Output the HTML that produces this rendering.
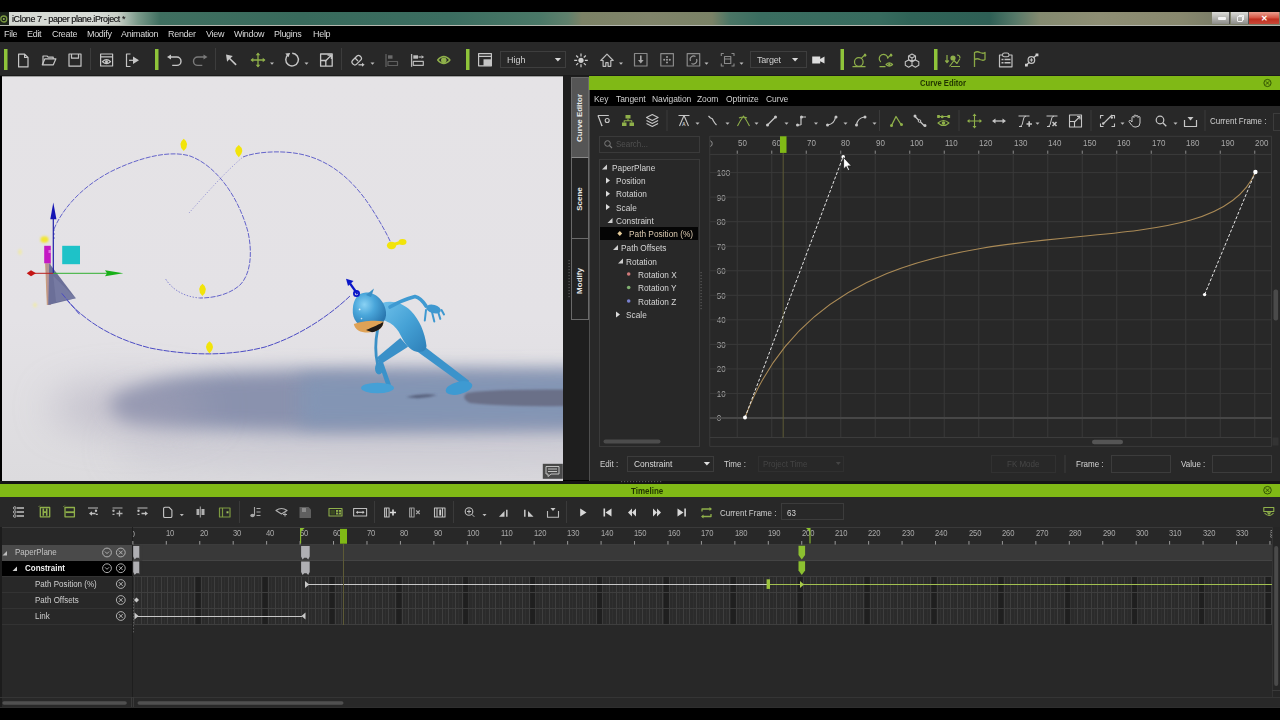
<!DOCTYPE html><html><head><meta charset="utf-8"><style>
*{margin:0;padding:0;box-sizing:border-box}
html,body{width:1280px;height:720px;overflow:hidden;background:#000;font-family:"Liberation Sans",sans-serif;-webkit-font-smoothing:antialiased}
.a{position:absolute;white-space:nowrap}
.t8{font-size:8px;line-height:10px;color:#cfcfcf}
svg{position:absolute;left:0;top:0}
</style></head><body>
<div class="a" style="left:0px;top:12px;width:1280px;height:14px;background:linear-gradient(90deg,#d4d8d2 0,#d8dbd6 95px,#c8cec6 118px,#7a9a8a 138px,#3f6f60 160px,#386a5c 300px,#3b6d60 450px,#4a7867 540px,#5f806c 568px,#7c8266 582px,#80846a 650px,#7a8266 712px,#4a7565 730px,#3a6d60 760px,#376b5e 880px,#2f6357 910px,#2e5f55 990px,#557868 1015px,#848a70 1040px,#8e8e74 1100px,#88886e 1180px,#7c7e68 1212px)"></div>
<div class="a" style="left:0px;top:12px;width:9px;height:13px;background:#1a221a"></div>
<div class="a" style="left:1212px;top:12px;width:18px;height:12px;background:linear-gradient(#dcdcd8,#b4b4b0 50%,#8c8c88);border-right:1px solid #555"></div>
<div class="a" style="left:1230.5px;top:12px;width:18px;height:12px;background:linear-gradient(#dcdcd8,#b4b4b0 50%,#8c8c88);border-right:1px solid #555"></div>
<div class="a" style="left:1249px;top:12px;width:30px;height:12px;background:linear-gradient(#eaa090,#d85a48 45%,#c03020 60%,#c84838)"></div>
<div class="a" style="left:1218px;top:17.3px;width:7.5px;height:2.8px;background:#f4f4f4;border-radius:1px"></div>
<div class="a" style="left:1237px;top:16px;width:6px;height:5.5px;border:1.4px solid #f0f0f0;border-radius:1px"></div>
<div class="a" style="left:1238.5px;top:14.5px;width:5.5px;height:5px;border-top:1.3px solid #f0f0f0;border-right:1.3px solid #f0f0f0"></div>
<div class="a a" style="left:1260.5px;top:12.5px;font-size:8px;color:#fff;font-weight:bold;line-height:11px">&#x2715;</div>
<div class="a" style="left:0px;top:24.5px;width:1280px;height:1.6px;background:#b4b6ae"></div>
<div class="a" style="left:0px;top:26px;width:1280px;height:16px;background:#000"></div>
<div class="a" style="left:0px;top:42px;width:1280px;height:34px;background:#282828"></div>
<div class="a" style="left:0px;top:75px;width:1280px;height:1px;background:#1b1b1b"></div>
<div class="a" style="left:2px;top:76px;width:561px;height:405px;background:#e3e2e6"></div>
<div class="a" style="left:563px;top:76px;width:26px;height:404px;background:#1e1e1e"></div>
<div class="a" style="left:589px;top:76px;width:691px;height:405px;background:#282828"></div>
<div class="a" style="left:0px;top:481px;width:1280px;height:226px;background:#282828"></div>
<div class="a" style="left:0px;top:481px;width:1280px;height:3px;background:#151515"></div>
<div class="a t8" style="left:12px;top:13px;font-size:9.54px;color:#262626;letter-spacing:-0.445px;line-height:12px;text-shadow:0 0 0.4px #555;transform:scaleX(0.9434);transform-origin:0 0">iClone 7 - paper plane.iProject *</div>
<div class="a t8" style="left:4px;top:29px;font-size:9.90px;color:#dadada;letter-spacing:-0.330px;line-height:10px;transform:scaleX(0.9091);transform-origin:0 0">File</div>
<div class="a t8" style="left:27px;top:29px;font-size:9.90px;color:#dadada;letter-spacing:-0.330px;line-height:10px;transform:scaleX(0.9091);transform-origin:0 0">Edit</div>
<div class="a t8" style="left:52px;top:29px;font-size:9.90px;color:#dadada;letter-spacing:-0.330px;line-height:10px;transform:scaleX(0.9091);transform-origin:0 0">Create</div>
<div class="a t8" style="left:87px;top:29px;font-size:9.90px;color:#dadada;letter-spacing:-0.330px;line-height:10px;transform:scaleX(0.9091);transform-origin:0 0">Modify</div>
<div class="a t8" style="left:121px;top:29px;font-size:9.90px;color:#dadada;letter-spacing:-0.330px;line-height:10px;transform:scaleX(0.9091);transform-origin:0 0">Animation</div>
<div class="a t8" style="left:168px;top:29px;font-size:9.90px;color:#dadada;letter-spacing:-0.330px;line-height:10px;transform:scaleX(0.9091);transform-origin:0 0">Render</div>
<div class="a t8" style="left:206px;top:29px;font-size:9.90px;color:#dadada;letter-spacing:-0.330px;line-height:10px;transform:scaleX(0.9091);transform-origin:0 0">View</div>
<div class="a t8" style="left:234px;top:29px;font-size:9.90px;color:#dadada;letter-spacing:-0.330px;line-height:10px;transform:scaleX(0.9091);transform-origin:0 0">Window</div>
<div class="a t8" style="left:274px;top:29px;font-size:9.90px;color:#dadada;letter-spacing:-0.330px;line-height:10px;transform:scaleX(0.9091);transform-origin:0 0">Plugins</div>
<div class="a t8" style="left:313px;top:29px;font-size:9.90px;color:#dadada;letter-spacing:-0.330px;line-height:10px;transform:scaleX(0.9091);transform-origin:0 0">Help</div>
<div class="a t8" style="left:507px;top:55px;font-size:9.45px;color:#cfcfcf;line-height:10px;transform:scaleX(0.9524);transform-origin:0 0">High</div>
<div class="a t8" style="left:757px;top:54.5px;font-size:9.45px;color:#cfcfcf;line-height:10px;letter-spacing:-0.210px;transform:scaleX(0.9524);transform-origin:0 0">Target</div>
<div class="a" style="left:589px;top:76px;width:691px;height:13.5px;background:#80b916"></div>
<div class="a t8" style="left:920px;top:78px;font-size:9.44px;font-weight:bold;color:#1f3300;line-height:10px;transform:scaleX(0.8136);transform-origin:left">Curve Editor</div>
<div class="a" style="left:589px;top:89.5px;width:691px;height:16.5px;background:#000"></div>
<div class="a t8" style="left:594px;top:93.6px;font-size:9.18px;color:#d0d0d0;line-height:10px;letter-spacing:-0.108px;transform:scaleX(0.9259);transform-origin:0 0">Key</div>
<div class="a t8" style="left:616px;top:93.6px;font-size:9.18px;color:#d0d0d0;line-height:10px;letter-spacing:-0.108px;transform:scaleX(0.9259);transform-origin:0 0">Tangent</div>
<div class="a t8" style="left:651.5px;top:93.6px;font-size:9.18px;color:#d0d0d0;line-height:10px;letter-spacing:-0.108px;transform:scaleX(0.9259);transform-origin:0 0">Navigation</div>
<div class="a t8" style="left:697px;top:93.6px;font-size:9.18px;color:#d0d0d0;line-height:10px;letter-spacing:-0.108px;transform:scaleX(0.9259);transform-origin:0 0">Zoom</div>
<div class="a t8" style="left:726px;top:93.6px;font-size:9.18px;color:#d0d0d0;line-height:10px;letter-spacing:-0.108px;transform:scaleX(0.9259);transform-origin:0 0">Optimize</div>
<div class="a t8" style="left:766px;top:93.6px;font-size:9.18px;color:#d0d0d0;line-height:10px;letter-spacing:-0.108px;transform:scaleX(0.9259);transform-origin:0 0">Curve</div>
<div class="a" style="left:589px;top:89.5px;width:1.2px;height:391px;background:#4e4e4e"></div>
<div class="a t8" style="left:1210px;top:116px;font-size:9.44px;color:#d0d0d0;line-height:10px;transform:scaleX(0.8475);transform-origin:0 0">Current Frame :</div>
<div class="a" style="left:1273px;top:112.5px;width:10px;height:18px;border:1px solid #3c3c3c"></div>
<div class="a" style="left:599px;top:136px;width:101px;height:16.5px;border:1px solid #3a3a3a"></div>
<div class="a t8" style="left:616px;top:139px;font-size:9.44px;color:#505050;line-height:10px;transform:scaleX(0.8475);transform-origin:0 0">Search...</div>
<div class="a" style="left:599px;top:159px;width:101px;height:288px;border:1px solid #3a3a3a"></div>
<div class="a" style="left:600px;top:227px;width:98px;height:13px;background:#050505"></div>
<div class="a t8" style="left:611.5px;top:162.5px;font-size:9.79px;color:#d6d6d6;line-height:10px;transform:scaleX(0.8475);transform-origin:0 0">PaperPlane</div>
<div class="a t8" style="left:616px;top:176.0px;font-size:9.79px;color:#d6d6d6;line-height:10px;transform:scaleX(0.8475);transform-origin:0 0">Position</div>
<div class="a t8" style="left:616px;top:189.25px;font-size:9.79px;color:#d6d6d6;line-height:10px;transform:scaleX(0.8475);transform-origin:0 0">Rotation</div>
<div class="a t8" style="left:616px;top:202.5px;font-size:9.79px;color:#d6d6d6;line-height:10px;transform:scaleX(0.8475);transform-origin:0 0">Scale</div>
<div class="a t8" style="left:615.75px;top:216.0px;font-size:9.79px;color:#d6d6d6;line-height:10px;transform:scaleX(0.8475);transform-origin:0 0">Constraint</div>
<div class="a t8" style="left:628.5px;top:229.0px;font-size:9.79px;color:#dccab0;line-height:10px;transform:scaleX(0.8475);transform-origin:0 0">Path Position (%)</div>
<div class="a t8" style="left:620.5px;top:243.0px;font-size:9.79px;color:#d6d6d6;line-height:10px;transform:scaleX(0.8475);transform-origin:0 0">Path Offsets</div>
<div class="a t8" style="left:626px;top:256.5px;font-size:9.79px;color:#d6d6d6;line-height:10px;transform:scaleX(0.8475);transform-origin:0 0">Rotation</div>
<div class="a t8" style="left:638px;top:269.5px;font-size:9.79px;color:#d6d6d6;line-height:10px;transform:scaleX(0.8475);transform-origin:0 0">Rotation X</div>
<div class="a t8" style="left:638px;top:283.0px;font-size:9.79px;color:#d6d6d6;line-height:10px;transform:scaleX(0.8475);transform-origin:0 0">Rotation Y</div>
<div class="a t8" style="left:638px;top:296.5px;font-size:9.79px;color:#d6d6d6;line-height:10px;transform:scaleX(0.8475);transform-origin:0 0">Rotation Z</div>
<div class="a t8" style="left:625.5px;top:310.0px;font-size:9.79px;color:#d6d6d6;line-height:10px;transform:scaleX(0.8475);transform-origin:0 0">Scale</div>
<div class="a t8" style="left:737.5px;top:138px;font-size:9.44px;color:#a8a8a8;line-height:9px;transform:scaleX(0.8475);transform-origin:0 0">50</div>
<div class="a t8" style="left:772.0px;top:138px;font-size:9.44px;color:#a8a8a8;line-height:9px;transform:scaleX(0.8475);transform-origin:0 0">60</div>
<div class="a t8" style="left:806.5px;top:138px;font-size:9.44px;color:#a8a8a8;line-height:9px;transform:scaleX(0.8475);transform-origin:0 0">70</div>
<div class="a t8" style="left:841.0px;top:138px;font-size:9.44px;color:#a8a8a8;line-height:9px;transform:scaleX(0.8475);transform-origin:0 0">80</div>
<div class="a t8" style="left:875.5px;top:138px;font-size:9.44px;color:#a8a8a8;line-height:9px;transform:scaleX(0.8475);transform-origin:0 0">90</div>
<div class="a t8" style="left:910.0px;top:138px;font-size:9.44px;color:#a8a8a8;line-height:9px;transform:scaleX(0.8475);transform-origin:0 0">100</div>
<div class="a t8" style="left:944.5px;top:138px;font-size:9.44px;color:#a8a8a8;line-height:9px;transform:scaleX(0.8475);transform-origin:0 0">110</div>
<div class="a t8" style="left:979.0px;top:138px;font-size:9.44px;color:#a8a8a8;line-height:9px;transform:scaleX(0.8475);transform-origin:0 0">120</div>
<div class="a t8" style="left:1013.5px;top:138px;font-size:9.44px;color:#a8a8a8;line-height:9px;transform:scaleX(0.8475);transform-origin:0 0">130</div>
<div class="a t8" style="left:1048.0px;top:138px;font-size:9.44px;color:#a8a8a8;line-height:9px;transform:scaleX(0.8475);transform-origin:0 0">140</div>
<div class="a t8" style="left:1082.5px;top:138px;font-size:9.44px;color:#a8a8a8;line-height:9px;transform:scaleX(0.8475);transform-origin:0 0">150</div>
<div class="a t8" style="left:1117.0px;top:138px;font-size:9.44px;color:#a8a8a8;line-height:9px;transform:scaleX(0.8475);transform-origin:0 0">160</div>
<div class="a t8" style="left:1151.5px;top:138px;font-size:9.44px;color:#a8a8a8;line-height:9px;transform:scaleX(0.8475);transform-origin:0 0">170</div>
<div class="a t8" style="left:1186.0px;top:138px;font-size:9.44px;color:#a8a8a8;line-height:9px;transform:scaleX(0.8475);transform-origin:0 0">180</div>
<div class="a t8" style="left:1220.5px;top:138px;font-size:9.44px;color:#a8a8a8;line-height:9px;transform:scaleX(0.8475);transform-origin:0 0">190</div>
<div class="a t8" style="left:1255.0px;top:138px;font-size:9.44px;color:#a8a8a8;line-height:9px;transform:scaleX(0.8475);transform-origin:0 0">200</div>
<div class="a t8" style="left:715.9px;top:413.4px;font-size:9.44px;color:#a4a4a4;line-height:9px;background:#282828;padding:0 1px;transform:scaleX(0.8475);transform-origin:0 0">0</div>
<div class="a t8" style="left:715.9px;top:388.9px;font-size:9.44px;color:#a4a4a4;line-height:9px;background:#282828;padding:0 1px;transform:scaleX(0.8475);transform-origin:0 0">10</div>
<div class="a t8" style="left:715.9px;top:364.3px;font-size:9.44px;color:#a4a4a4;line-height:9px;background:#282828;padding:0 1px;transform:scaleX(0.8475);transform-origin:0 0">20</div>
<div class="a t8" style="left:715.9px;top:339.8px;font-size:9.44px;color:#a4a4a4;line-height:9px;background:#282828;padding:0 1px;transform:scaleX(0.8475);transform-origin:0 0">30</div>
<div class="a t8" style="left:715.9px;top:315.2px;font-size:9.44px;color:#a4a4a4;line-height:9px;background:#282828;padding:0 1px;transform:scaleX(0.8475);transform-origin:0 0">40</div>
<div class="a t8" style="left:715.9px;top:290.7px;font-size:9.44px;color:#a4a4a4;line-height:9px;background:#282828;padding:0 1px;transform:scaleX(0.8475);transform-origin:0 0">50</div>
<div class="a t8" style="left:715.9px;top:266.2px;font-size:9.44px;color:#a4a4a4;line-height:9px;background:#282828;padding:0 1px;transform:scaleX(0.8475);transform-origin:0 0">60</div>
<div class="a t8" style="left:715.9px;top:241.6px;font-size:9.44px;color:#a4a4a4;line-height:9px;background:#282828;padding:0 1px;transform:scaleX(0.8475);transform-origin:0 0">70</div>
<div class="a t8" style="left:715.9px;top:217.1px;font-size:9.44px;color:#a4a4a4;line-height:9px;background:#282828;padding:0 1px;transform:scaleX(0.8475);transform-origin:0 0">80</div>
<div class="a t8" style="left:715.9px;top:192.5px;font-size:9.44px;color:#a4a4a4;line-height:9px;background:#282828;padding:0 1px;transform:scaleX(0.8475);transform-origin:0 0">90</div>
<div class="a t8" style="left:715.9px;top:168.0px;font-size:9.44px;color:#a4a4a4;line-height:9px;background:#282828;padding:0 1px;transform:scaleX(0.8475);transform-origin:0 0">100</div>
<div class="a t8" style="left:599.5px;top:459px;font-size:9.44px;color:#d0d0d0;line-height:10px;transform:scaleX(0.8475);transform-origin:0 0">Edit :</div>
<div class="a" style="left:627.3px;top:455.8px;width:87px;height:16.4px;border:1px solid #3c3c3c"></div>
<div class="a t8" style="left:633.5px;top:459px;font-size:9.91px;color:#dadada;line-height:10px;transform:scaleX(0.8475);transform-origin:0 0">Constraint</div>
<div class="a t8" style="left:724px;top:459px;font-size:9.44px;color:#d0d0d0;line-height:10px;transform:scaleX(0.8475);transform-origin:0 0">Time :</div>
<div class="a" style="left:758px;top:455.8px;width:86px;height:16.4px;border:1px solid #303030"></div>
<div class="a t8" style="left:763px;top:459px;font-size:9.44px;color:#444;line-height:10px;transform:scaleX(0.8475);transform-origin:0 0">Project Time</div>
<div class="a" style="left:991px;top:454.8px;width:65px;height:18px;border:1px solid #313131"></div>
<div class="a t8" style="left:1007px;top:459px;font-size:9.44px;color:#464646;line-height:10px;transform:scaleX(0.8475);transform-origin:0 0">FK Mode</div>
<div class="a t8" style="left:1076px;top:459px;font-size:9.44px;color:#d6d6d6;line-height:10px;transform:scaleX(0.8475);transform-origin:0 0">Frame :</div>
<div class="a" style="left:1111px;top:454.8px;width:60px;height:18px;border:1px solid #3c3c3c"></div>
<div class="a t8" style="left:1181px;top:459px;font-size:9.44px;color:#d6d6d6;line-height:10px;transform:scaleX(0.8475);transform-origin:0 0">Value :</div>
<div class="a" style="left:1212px;top:454.8px;width:60px;height:18px;border:1px solid #3c3c3c"></div>
<div class="a" style="left:571.2px;top:77px;width:17.7px;height:81px;background:#555;border:1px solid #6a6a6a;border-bottom:1.5px solid #8a8a8a"></div>
<div class="a" style="left:571.2px;top:158px;width:17.7px;height:81px;background:#232323;border:1px solid #6a6a6a;border-top:none"></div>
<div class="a" style="left:571.2px;top:239px;width:17.7px;height:81px;background:#232323;border:1px solid #6a6a6a;border-top:none"></div>
<div class="a" style="left:580px;top:117.5px;width:0;height:0"><div style="position:absolute;left:-40px;top:-5px;width:80px;text-align:center;font-size:8px;font-weight:bold;color:#e8e8e8;line-height:10px;transform:rotate(-90deg)">Curve Editor</div></div>
<div class="a" style="left:580px;top:198.5px;width:0;height:0"><div style="position:absolute;left:-40px;top:-5px;width:80px;text-align:center;font-size:8px;font-weight:bold;color:#e8e8e8;line-height:10px;transform:rotate(-90deg)">Scene</div></div>
<div class="a" style="left:580px;top:281px;width:0;height:0"><div style="position:absolute;left:-40px;top:-5px;width:80px;text-align:center;font-size:8px;font-weight:bold;color:#e8e8e8;line-height:10px;transform:rotate(-90deg)">Modify</div></div>
<div class="a" style="left:0px;top:483.8px;width:1280px;height:13.6px;background:#80b916"></div>
<div class="a t8" style="left:630.6px;top:486.2px;font-size:9.44px;font-weight:bold;color:#1f3300;line-height:10px;transform:scaleX(0.8475);transform-origin:0 0">Timeline</div>
<div class="a t8" style="left:720px;top:507.5px;font-size:9.44px;color:#cfcfcf;line-height:10px;transform:scaleX(0.8475);transform-origin:0 0">Current Frame :</div>
<div class="a" style="left:781px;top:502.5px;width:63px;height:17.5px;border:1px solid #3c3c3c"></div>
<div class="a t8" style="left:786.5px;top:507.5px;font-size:9.44px;color:#d4d4d4;line-height:10px;transform:scaleX(0.8475);transform-origin:0 0">63</div>
<div class="a" style="left:0px;top:527px;width:1280px;height:0.8px;background:#3a3a3a"></div>
<div class="a" style="left:0px;top:544.5px;width:131.5px;height:16px;background:#4a4a4a"></div>
<div class="a" style="left:0px;top:560.5px;width:131.5px;height:15.5px;background:#000"></div>
<div class="a" style="left:0px;top:576px;width:131.5px;height:0.8px;background:#333"></div>
<div class="a" style="left:0px;top:592px;width:131.5px;height:0.8px;background:#333"></div>
<div class="a" style="left:0px;top:608px;width:131.5px;height:0.8px;background:#333"></div>
<div class="a" style="left:0px;top:624.3px;width:131.5px;height:0.8px;background:#333"></div>
<div class="a" style="left:0px;top:527px;width:2px;height:180px;background:#1c1c1c"></div>
<div class="a t8" style="left:14.6px;top:546.5px;font-size:9.44px;color:#c4c4c4;line-height:10px;transform:scaleX(0.8475);transform-origin:0 0">PaperPlane</div>
<div class="a t8" style="left:24.5px;top:563.3px;font-size:9.44px;font-weight:bold;color:#f0f0f0;line-height:10px;transform:scaleX(0.8475);transform-origin:0 0">Constraint</div>
<div class="a t8" style="left:34.5px;top:579px;font-size:9.44px;color:#cfcfcf;line-height:10px;transform:scaleX(0.8475);transform-origin:0 0">Path Position (%)</div>
<div class="a t8" style="left:34.5px;top:595px;font-size:9.44px;color:#cfcfcf;line-height:10px;transform:scaleX(0.8475);transform-origin:0 0">Path Offsets</div>
<div class="a t8" style="left:34.5px;top:611px;font-size:9.44px;color:#cfcfcf;line-height:10px;transform:scaleX(0.8475);transform-origin:0 0">Link</div>
<div class="a" style="left:131.5px;top:527px;width:1.5px;height:170px;background:#1e1e1e"></div>
<div class="a t8" style="left:133px;top:528.6px;font-size:9.44px;color:#aaa;line-height:9px;overflow:hidden;width:4px;transform:scaleX(0.8475);transform-origin:0 0"><span style="margin-left:-3px">0</span></div>
<div class="a t8" style="left:166.1px;top:529px;font-size:8.97px;color:#ababab;line-height:9px;letter-spacing:-0.177px;transform:scaleX(0.8475);transform-origin:0 0">10</div>
<div class="a t8" style="left:199.5px;top:529px;font-size:8.97px;color:#ababab;line-height:9px;letter-spacing:-0.177px;transform:scaleX(0.8475);transform-origin:0 0">20</div>
<div class="a t8" style="left:233.0px;top:529px;font-size:8.97px;color:#ababab;line-height:9px;letter-spacing:-0.177px;transform:scaleX(0.8475);transform-origin:0 0">30</div>
<div class="a t8" style="left:266.4px;top:529px;font-size:8.97px;color:#ababab;line-height:9px;letter-spacing:-0.177px;transform:scaleX(0.8475);transform-origin:0 0">40</div>
<div class="a t8" style="left:299.9px;top:529px;font-size:8.97px;color:#ababab;line-height:9px;letter-spacing:-0.177px;transform:scaleX(0.8475);transform-origin:0 0">50</div>
<div class="a t8" style="left:333.3px;top:529px;font-size:8.97px;color:#ababab;line-height:9px;letter-spacing:-0.177px;transform:scaleX(0.8475);transform-origin:0 0">60</div>
<div class="a t8" style="left:366.8px;top:529px;font-size:8.97px;color:#ababab;line-height:9px;letter-spacing:-0.177px;transform:scaleX(0.8475);transform-origin:0 0">70</div>
<div class="a t8" style="left:400.2px;top:529px;font-size:8.97px;color:#ababab;line-height:9px;letter-spacing:-0.177px;transform:scaleX(0.8475);transform-origin:0 0">80</div>
<div class="a t8" style="left:433.7px;top:529px;font-size:8.97px;color:#ababab;line-height:9px;letter-spacing:-0.177px;transform:scaleX(0.8475);transform-origin:0 0">90</div>
<div class="a t8" style="left:467.1px;top:529px;font-size:8.97px;color:#ababab;line-height:9px;letter-spacing:-0.177px;transform:scaleX(0.8475);transform-origin:0 0">100</div>
<div class="a t8" style="left:500.5px;top:529px;font-size:8.97px;color:#ababab;line-height:9px;letter-spacing:-0.177px;transform:scaleX(0.8475);transform-origin:0 0">110</div>
<div class="a t8" style="left:534.0px;top:529px;font-size:8.97px;color:#ababab;line-height:9px;letter-spacing:-0.177px;transform:scaleX(0.8475);transform-origin:0 0">120</div>
<div class="a t8" style="left:567.4px;top:529px;font-size:8.97px;color:#ababab;line-height:9px;letter-spacing:-0.177px;transform:scaleX(0.8475);transform-origin:0 0">130</div>
<div class="a t8" style="left:600.9px;top:529px;font-size:8.97px;color:#ababab;line-height:9px;letter-spacing:-0.177px;transform:scaleX(0.8475);transform-origin:0 0">140</div>
<div class="a t8" style="left:634.3px;top:529px;font-size:8.97px;color:#ababab;line-height:9px;letter-spacing:-0.177px;transform:scaleX(0.8475);transform-origin:0 0">150</div>
<div class="a t8" style="left:667.8px;top:529px;font-size:8.97px;color:#ababab;line-height:9px;letter-spacing:-0.177px;transform:scaleX(0.8475);transform-origin:0 0">160</div>
<div class="a t8" style="left:701.2px;top:529px;font-size:8.97px;color:#ababab;line-height:9px;letter-spacing:-0.177px;transform:scaleX(0.8475);transform-origin:0 0">170</div>
<div class="a t8" style="left:734.7px;top:529px;font-size:8.97px;color:#ababab;line-height:9px;letter-spacing:-0.177px;transform:scaleX(0.8475);transform-origin:0 0">180</div>
<div class="a t8" style="left:768.1px;top:529px;font-size:8.97px;color:#ababab;line-height:9px;letter-spacing:-0.177px;transform:scaleX(0.8475);transform-origin:0 0">190</div>
<div class="a t8" style="left:801.5px;top:529px;font-size:8.97px;color:#ababab;line-height:9px;letter-spacing:-0.177px;transform:scaleX(0.8475);transform-origin:0 0">200</div>
<div class="a t8" style="left:835.0px;top:529px;font-size:8.97px;color:#ababab;line-height:9px;letter-spacing:-0.177px;transform:scaleX(0.8475);transform-origin:0 0">210</div>
<div class="a t8" style="left:868.4px;top:529px;font-size:8.97px;color:#ababab;line-height:9px;letter-spacing:-0.177px;transform:scaleX(0.8475);transform-origin:0 0">220</div>
<div class="a t8" style="left:901.9px;top:529px;font-size:8.97px;color:#ababab;line-height:9px;letter-spacing:-0.177px;transform:scaleX(0.8475);transform-origin:0 0">230</div>
<div class="a t8" style="left:935.3px;top:529px;font-size:8.97px;color:#ababab;line-height:9px;letter-spacing:-0.177px;transform:scaleX(0.8475);transform-origin:0 0">240</div>
<div class="a t8" style="left:968.8px;top:529px;font-size:8.97px;color:#ababab;line-height:9px;letter-spacing:-0.177px;transform:scaleX(0.8475);transform-origin:0 0">250</div>
<div class="a t8" style="left:1002.2px;top:529px;font-size:8.97px;color:#ababab;line-height:9px;letter-spacing:-0.177px;transform:scaleX(0.8475);transform-origin:0 0">260</div>
<div class="a t8" style="left:1035.6px;top:529px;font-size:8.97px;color:#ababab;line-height:9px;letter-spacing:-0.177px;transform:scaleX(0.8475);transform-origin:0 0">270</div>
<div class="a t8" style="left:1069.1px;top:529px;font-size:8.97px;color:#ababab;line-height:9px;letter-spacing:-0.177px;transform:scaleX(0.8475);transform-origin:0 0">280</div>
<div class="a t8" style="left:1102.5px;top:529px;font-size:8.97px;color:#ababab;line-height:9px;letter-spacing:-0.177px;transform:scaleX(0.8475);transform-origin:0 0">290</div>
<div class="a t8" style="left:1136.0px;top:529px;font-size:8.97px;color:#ababab;line-height:9px;letter-spacing:-0.177px;transform:scaleX(0.8475);transform-origin:0 0">300</div>
<div class="a t8" style="left:1169.4px;top:529px;font-size:8.97px;color:#ababab;line-height:9px;letter-spacing:-0.177px;transform:scaleX(0.8475);transform-origin:0 0">310</div>
<div class="a t8" style="left:1202.9px;top:529px;font-size:8.97px;color:#ababab;line-height:9px;letter-spacing:-0.177px;transform:scaleX(0.8475);transform-origin:0 0">320</div>
<div class="a t8" style="left:1236.3px;top:529px;font-size:8.97px;color:#ababab;line-height:9px;letter-spacing:-0.177px;transform:scaleX(0.8475);transform-origin:0 0">330</div>
<div class="a t8" style="left:1269.8px;top:529px;font-size:8.97px;color:#ababab;line-height:9px;letter-spacing:-0.177px;transform:scaleX(0.8475);transform-origin:0 0">340</div>
<div class="a t8" style="left:1269.5px;top:530px;font-size:9.44px;color:#a8a8a8;line-height:9px;overflow:hidden;width:2.2px;transform:scaleX(0.8475);transform-origin:0 0">3</div>
<div class="a" style="left:133px;top:544.4px;width:1139px;height:0.8px;background:#3c3c3c"></div>
<div class="a" style="left:133px;top:545px;width:1139px;height:15.5px;background:#393939"></div>
<div class="a" style="left:133px;top:560.5px;width:1139px;height:15.5px;background:#2c2c2c"></div>
<div class="a" style="left:133px;top:560.2px;width:1139px;height:0.6px;background:#444"></div>
<div class="a" style="left:133px;top:576px;width:1139px;height:48.5px;background:#2b2b2b"></div>
<div class="a" style="left:1272px;top:527px;width:8px;height:170px;background:#262626;border-left:1px solid #333"></div>
<div class="a" style="left:1272px;top:690px;width:8px;height:0.8px;background:#3a3a3a"></div>
<div class="a" style="left:0px;top:697px;width:1280px;height:0.8px;background:#353535"></div>
<div class="a" style="left:0px;top:706.5px;width:1280px;height:0.8px;background:#2e2e2e"></div>
<div class="a" style="left:131.3px;top:697px;width:3px;height:10px;border-left:1px solid #3a3a3a;border-right:1px solid #3a3a3a"></div>
<svg width="1280" height="720" viewBox="0 0 1280 720"><defs><clipPath id="vpc"><rect x="2" y="76" width="561" height="405"/></clipPath><filter id="b20" x="-50%" y="-200%" width="200%" height="500%"><feGaussianBlur stdDeviation="20"/></filter><filter id="b10" x="-50%" y="-200%" width="200%" height="500%"><feGaussianBlur stdDeviation="9"/></filter><filter id="b6" x="-50%" y="-200%" width="200%" height="500%"><feGaussianBlur stdDeviation="6"/></filter><filter id="b3" x="-50%" y="-200%" width="200%" height="500%"><feGaussianBlur stdDeviation="2.5"/></filter><filter id="b1" x="-50%" y="-50%" width="200%" height="200%"><feGaussianBlur stdDeviation="0.8"/></filter><linearGradient id="bodyg" x1="0" y1="0" x2="1" y2="1"><stop offset="0" stop-color="#6ec0ea"/><stop offset="0.5" stop-color="#46a2d6"/><stop offset="1" stop-color="#2d7fb8"/></linearGradient><radialGradient id="headg" cx="0.35" cy="0.35" r="0.7"><stop offset="0" stop-color="#8ad2f4"/><stop offset="0.45" stop-color="#4aa6da"/><stop offset="1" stop-color="#2a78b0"/></radialGradient><linearGradient id="floorg" x1="0" y1="0" x2="0" y2="1"><stop offset="0" stop-color="#e5e3e6"/><stop offset="0.6" stop-color="#e4e2e6"/><stop offset="1" stop-color="#dcdbde"/></linearGradient></defs><g clip-path="url(#vpc)"><rect x="2" y="76" width="561" height="405" fill="url(#floorg)"/><rect x="2" y="76" width="561" height="1" fill="#a0a0a0"/><path d="M120,440 Q200,425 300,424 L600,425 L600,462 Q300,468 120,455z" fill="#b4b2c2" opacity="0.55" filter="url(#b20)"/><path d="M115,396 Q150,377 220,372 Q300,368 380,369 L600,371 L600,430 L380,432 Q220,434 130,422 Q100,410 115,396z" fill="#8a92ae" filter="url(#b10)"/><path d="M300,376 L600,373 L600,424 L300,426z" fill="#8296b6" opacity="0.85" filter="url(#b10)"/><ellipse cx="130" cy="408" rx="80" ry="22" fill="#a8a4b8" opacity="0.6" filter="url(#b20)"/><path d="M467,393 Q500,388 600,390 L600,405 Q520,408 470,403 Q460,398 467,393z" fill="#6a7088" filter="url(#b1)"/><path d="M54,229 C62,210 80,188 110,172 C140,157 170,150 190,156 C215,165 238,195 248,232 C253,255 250,275 240,285 C230,294 215,298 200,298" fill="none" stroke="#4c4cc4" stroke-width="0.85" stroke-dasharray="5,1.3" opacity="1"/><path d="M200,298 C185,297 172,290 165,278" fill="none" stroke="#4c4cc4" stroke-width="0.8" stroke-dasharray="1.5,1.5" opacity="0.8"/><path d="M189,213 C205,195 225,172 243,157" fill="none" stroke="#4c4cc4" stroke-width="0.7" stroke-dasharray="1.2,1.8" opacity="0.7"/><path d="M243,157 C255,152 280,150 300,154 C330,160 352,180 368,203 C378,218 386,232 391,243" fill="none" stroke="#4c4cc4" stroke-width="0.85" stroke-dasharray="5,1.3" opacity="1"/><path d="M62,294 C80,318 110,338 150,348 C190,356 230,356 265,347 C300,336 330,315 350,296" fill="none" stroke="#4c4cc4" stroke-width="1" stroke-dasharray="6,1" opacity="1"/><path d="M54,229 L54,240" fill="none" stroke="#4c4cc4" stroke-width="0.8" stroke-dasharray="2,2" opacity="1"/><path d="M183.75,138.8 Q190.75,144 183.75,151 Q176.75,144 183.75,138.8z" fill="#f2e40a" opacity="1"/><path d="M238.75,145.05 Q245.75,150.25 238.75,157.25 Q231.75,150.25 238.75,145.05z" fill="#f2e40a" opacity="1"/><path d="M202.5,283.8 Q209.5,289 202.5,296 Q195.5,289 202.5,283.8z" fill="#f2e40a" opacity="1"/><path d="M209.5,341.3 Q216.5,346.5 209.5,353.5 Q202.5,346.5 209.5,341.3z" fill="#f2e40a" opacity="1"/><ellipse cx="391.5" cy="245.5" rx="4.6" ry="3.8" fill="#f2e40a"/><ellipse cx="402.5" cy="242" rx="4" ry="3" fill="#f2e40a"/><path d="M392,245 L402,242" stroke="#f2e40a" stroke-width="3"/><ellipse cx="44.5" cy="239.5" rx="4" ry="3.2" fill="#f2e630" filter="url(#b1)"/><ellipse cx="20" cy="252" rx="2" ry="3" fill="#f4ee90" opacity="0.6" filter="url(#b1)"/><ellipse cx="35" cy="305" rx="2" ry="2.5" fill="#f4ee90" opacity="0.6" filter="url(#b1)"/><path d="M45.6,263.3 L50.8,263.3 L50.8,305 L47.3,305z" fill="#b89494"/><path d="M45.6,263.3 L47.3,305" stroke="#c8946a" stroke-width="0.8"/><path d="M49.2,263.3 L75.8,298.3 L48.3,305z" fill="#6b6f98"/><path d="M53.3,276 L75.8,298.3 L56,302z" fill="#7d82a8" opacity="0.6"/><line x1="53.3" y1="218" x2="53.3" y2="273.3" stroke="#2020a8" stroke-width="1.2"/><path d="M53.3,202.5 L56.4,219.2 L50.3,219.2z" fill="#1414b4"/><line x1="31" y1="273.3" x2="53.3" y2="273.3" stroke="#b82020" stroke-width="1"/><path d="M26.7,273.3 L31,270.3 L36,273.3 L31,276.3z" fill="#c41414"/><line x1="53.3" y1="273.3" x2="108" y2="273.3" stroke="#30b030" stroke-width="1"/><path d="M123.3,273.3 L105,270.3 L107,273.3 L105,276.3z" fill="#18b018"/><rect x="44.2" y="245.8" width="6.6" height="17.5" fill="#c418c4"/><rect x="48.5" y="250" width="2.5" height="3" fill="#e070e0"/><rect x="62.2" y="245.8" width="17.8" height="18.4" fill="#1ec2c8"/><path d="M61.7,293.3 L80,315" fill="none" stroke="#4c4cc4" stroke-width="1" stroke-dasharray="6,1" opacity="1"/><g><path d="M412,347.8 L423.7,345.9 L469.4,380.9 L464.5,385.8 Z" fill="#3b93cb"/><ellipse cx="459" cy="388" rx="13.6" ry="6.2" transform="rotate(-14 459 388)" fill="#3e9ad2"/><path d="M400.3,338.1 L408.1,346.8 L381.8,363.4 L377,357.5 Z" fill="#3a90c8"/><path d="M377,358.5 L382.8,361.4 L391,384.8 L386.3,385.2 Z" fill="#3a92ca"/><ellipse cx="377.5" cy="388" rx="16.5" ry="5.2" fill="#45a0d6"/><path d="M382,303 C392,300 403,303 411,311 C419,319 425,332 426.5,346 C426,352 420,353 414,351 C408,348 404,342 401,336 C398,330 395,326 390,323 C386,321 383,320 381,318 Z" fill="url(#bodyg)"/><path d="M390,307 Q402,300 415,296.5 Q421,298 426,306" stroke="#3f9ad2" stroke-width="3.6" fill="none" stroke-linecap="round"/><ellipse cx="433.5" cy="309" rx="7.5" ry="4.2" transform="rotate(15 433.5 309)" fill="#3e98d0"/><path d="M426,310 L424.8,320.5 M432,312 L434.3,321.5 M438,311.5 L440.3,318.9 M441.5,310 L444,314.5" stroke="#3e98d0" stroke-width="2" stroke-linecap="round"/><path d="M377.5,330 Q374,348 377.5,364" stroke="#3a90c6" stroke-width="2.8" fill="none" stroke-linecap="round"/><ellipse cx="379" cy="368.5" rx="4" ry="6" fill="#3a92c8"/><path d="M366,292.6 C376,292 385,302 386,312 C387,322 380,327 370,327 C358,327 352,320 352.8,309 C353.5,299 358,293 366,292.6 Z" fill="url(#headg)"/><path d="M366,295 L374,288.5 L371,297z" fill="#3a90c6"/><circle cx="359.6" cy="309.4" r="0.9" fill="#fff" opacity="0.85"/><circle cx="361.5" cy="318.6" r="0.8" fill="#fff" opacity="0.75"/><path d="M353.8,324 C360,321.5 374,319.5 383.5,321.5 C384,327 378,332 368,332.5 C360,332.5 355,330 353.8,324 Z" fill="#dfa256"/><path d="M366,330 C373,327 380,324 383.3,322 C383.3,327 379,331 372,332.3 Z" fill="#1e1a18"/><path d="M406,397 q15,-4 31,-2 q-15,5 -31,2z" fill="#4e5470" opacity="0.8" filter="url(#b1)"/><path d="M357.5,294 L350,283.5" stroke="#0a16c8" stroke-width="2.2"/><path d="M346,278.8 L353.5,281 L348,286z" fill="#0a16c8"/><circle cx="356.5" cy="293.5" r="2.6" fill="none" stroke="#0a16c8" stroke-width="1.8"/></g></g><rect x="542.8" y="463.8" width="20" height="15" fill="#3a3a3a" opacity="0.9"/><path d="M546,466.5 h13 v7.5 h-8 l-3,2.5 v-2.5 h-2z M548,469 h9 M548,471.5 h9" fill="none" stroke="#cfcfcf" stroke-width="0.9"/><rect x="4" y="49" width="3.5" height="21" fill="#8fc43a"/><circle cx="3.8" cy="19" r="3" fill="none" stroke="#7a9a40" stroke-width="1.3"/><circle cx="3.8" cy="19" r="1" fill="#9ab860"/><path d="M18.6,54.1 h6 l3.4,3.4 v9.4 h-9.4 z M24.6,54.1 v3.4 h3.4" stroke="#c6c6c6" stroke-width="1.2" fill="none" stroke-linejoin="round" /><path d="M43,64.5 v-8.5 h4 l1.2,1.2 h5 v1.8" stroke="#c6c6c6" stroke-width="1.2" fill="none" stroke-linejoin="round" /><path d="M42.3,64.8 l2.6,-6 h11 l-2.6,6 z" stroke="#c6c6c6" stroke-width="1.2" fill="none" stroke-linejoin="round" /><path d="M69,54 h12 v12.2 h-12 z M71.5,54 v4.2 h7 v-4.2" stroke="#c6c6c6" stroke-width="1.2" fill="none" stroke-linejoin="round" /><line x1="90.5" y1="48" x2="90.5" y2="70" stroke="#3c3c3c" stroke-width="1"/><path d="M100.6,54 h12 v12 h-12 z M100.6,56.8 h12" stroke="#c6c6c6" stroke-width="1.2" fill="none" stroke-linejoin="round" /><path d="M102.4,61.6 q4.1,-4 8.2,0 q-4.1,4 -8.2,0 z" stroke="#c6c6c6" stroke-width="1.2" fill="none" stroke-linejoin="round" /><path d="M106.5,60.2 a1.5,1.5 0 1 1 0,3 a1.5,1.5 0 1 1 0,-3z" fill="#c6c6c6"/><path d="M130.5,54 h-4 v12.5 h4" stroke="#c6c6c6" stroke-width="1.2" fill="none" stroke-linejoin="round" /><path d="M129,60.3 h4" stroke="#c6c6c6" stroke-width="1.2" fill="none" stroke-linejoin="round" /><path d="M133,56.6 l6,3.7 l-6,3.7 z" fill="#c6c6c6"/><rect x="155" y="49" width="3.5" height="21" fill="#8fc43a"/><path d="M167,57 l4,-2.6 v5.2 z" fill="#c6c6c6"/><path d="M170.5,57 h6.3 a4.2,4.2 0 0 1 0,8.4 h-4.6" stroke="#c6c6c6" stroke-width="1.4" fill="none" stroke-linejoin="round" /><path d="M207.5,57 l-4,-2.6 v5.2 z" fill="#7a7a7a"/><path d="M204,57 h-6.3 a4.2,4.2 0 0 0 0,8.4 h4.6" stroke="#7a7a7a" stroke-width="1.4" fill="none" stroke-linejoin="round" /><line x1="215.5" y1="48" x2="215.5" y2="70" stroke="#3c3c3c" stroke-width="1"/><path d="M226,54.6 l6.8,1.4 l-2.4,2.2 l6.3,6.1 l-1.2,1.2 l-6.2,-6.2 l-2.2,2.4 z" fill="#c6c6c6"/><path d="M258,53.5 v13 M251.5,60 h13" stroke="#8fb04a" stroke-width="1.3" fill="none" stroke-linejoin="round" /><path d="M258,52.5 l-2.3,2.8 h4.6z M258,67.5 l-2.3,-2.8 h4.6z M250.5,60 l2.8,-2.3 v4.6z M265.5,60 l-2.8,-2.3 v4.6z" fill="#8fb04a"/><path d="M270,62.5 h4 l-2,2.2 z" fill="#bbbbbb"/><path d="M288.5,54.4 a6.3,6.3 0 1 0 3.7,-1.1" stroke="#c6c6c6" stroke-width="1.4" fill="none" stroke-linejoin="round" /><path d="M285.3,53.5 l4.8,-0.6 l-1.6,4.3 z" fill="#c6c6c6"/><path d="M304.5,62.5 h4 l-2,2.2 z" fill="#bbbbbb"/><path d="M320.6,54 h11.6 v12.2 h-11.6 z M320.6,60.5 h5.2 v5.7" stroke="#c6c6c6" stroke-width="1.3" fill="none" stroke-linejoin="round" /><path d="M325,61.5 l6,-6 M327.5,55.2 h3.9 v3.9" stroke="#c6c6c6" stroke-width="1.3" fill="none" stroke-linejoin="round" /><line x1="341.5" y1="48" x2="341.5" y2="70" stroke="#3c3c3c" stroke-width="1"/><path d="M352.5,60.5 l4.5,-4.5 a2.1,2.1 0 0 1 3,0 l0.9,0.9 a2.1,2.1 0 0 1 0,3 l-4.5,4.5 a2.1,2.1 0 0 1 -3,0 l-0.9,-0.9 a2.1,2.1 0 0 1 0,-3 z" stroke="#c6c6c6" stroke-width="1.3" fill="none" stroke-linejoin="round" /><path d="M355,58 l3,3" stroke="#c6c6c6" stroke-width="1.3" fill="none" stroke-linejoin="round" /><path d="M358.5,64.8 h4" stroke="#c6c6c6" stroke-width="1.3" fill="none" stroke-linejoin="round" /><path d="M362,62.8 l2.6,2 l-2.6,2z" fill="#c6c6c6"/><path d="M370.5,62.5 h4 l-2,2.2 z" fill="#bbbbbb"/><path d="M386,54 v13" stroke="#5f5f5f" stroke-width="1.3" fill="none" stroke-linejoin="round" /><path d="M388,55.3 h4.5 v3.4 h-4.5z" fill="#6a6a6a"/><path d="M388,61.5 h9.5 v4 h-9.5z" stroke="#5f5f5f" stroke-width="1.2" fill="none" stroke-linejoin="round" /><path d="M411.6,54 v12.8" stroke="#b8b8b8" stroke-width="1.3" fill="none" stroke-linejoin="round" /><path d="M413.3,55.3 h4.7 v3.4 h-4.7z" fill="#bdbdbd"/><path d="M418.5,57 h3" stroke="#bdbdbd" stroke-width="1.2" fill="none" stroke-linejoin="round" /><path d="M421.5,55.3 l2.7,1.7 l-2.7,1.7z" fill="#bdbdbd"/><path d="M413.3,61.3 h10 v4 h-10z" stroke="#b8b8b8" stroke-width="1.2" fill="none" stroke-linejoin="round" /><path d="M437.6,60 q6.2,-7 12.4,0 q-6.2,7 -12.4,0 z" stroke="#8fb04a" stroke-width="1.3" fill="none" stroke-linejoin="round" /><path d="M443.8,57.4 a2.8,2.8 0 1 1 0,5.6 a2.8,2.8 0 1 1 0,-5.6z" fill="#8fb04a"/><rect x="466" y="49" width="3.5" height="21" fill="#8fc43a"/><path d="M478.6,53.6 h12.8 v12.2 h-12.8 z M478.6,56.3 h12.8" stroke="#c6c6c6" stroke-width="1.2" fill="none" stroke-linejoin="round" /><path d="M483.5,59.3 h8 v6.5 h-8z" fill="#c6c6c6"/><rect x="500.5" y="51.5" width="65" height="16" fill="none" stroke="#3e3e3e" stroke-width="1"/><path d="M554.8,58 h6.2 l-3.1,3.6z" fill="#d8d8d8"/><circle cx="581" cy="60.3" r="2.6" fill="#cfcfcf"/><path d="M581,53.4 v3 M581,64.2 v3 M574.2,60.3 h3 M584.8,60.3 h3 M576.2,55.5 l2,2 M583.8,63.1 l2,2 M585.8,55.5 l-2,2 M578.2,63.1 l-2,2" stroke="#cfcfcf" stroke-width="1.2" fill="none" stroke-linejoin="round" /><path d="M600.8,60.5 l6.2,-6.4 l6.2,6.4 h-2.4 v5.8 h-2.7 v-3.6 h-2.3 v3.6 h-2.7 v-5.8 z" stroke="#bdbdbd" stroke-width="1.2" fill="none" stroke-linejoin="round" /><path d="M619,62.5 h4 l-2,2.2 z" fill="#bbbbbb"/><path d="M634.5,53.5 h12.5 v12.5 h-12.5 z" stroke="#8a8a8a" stroke-width="1.2" fill="none" stroke-linejoin="round" /><path d="M640.8,55.5 v6" stroke="#a8a8a8" stroke-width="1.6" fill="none" stroke-linejoin="round" /><path d="M638,60 h5.6 l-2.8,3.5z" fill="#a8a8a8"/><path d="M660.8,53.6 h12.6 v12.4 h-12.6 z" stroke="#8a8a8a" stroke-width="1.2" fill="none" stroke-linejoin="round" /><path d="M667,56 a1,1 0 1 1 0,2 a1,1 0 1 1 0,-2z M667,61.6 a1,1 0 1 1 0,2 a1,1 0 1 1 0,-2z M664.2,58.8 a1,1 0 1 1 0,2 a1,1 0 1 1 0,-2z M669.8,58.8 a1,1 0 1 1 0,2 a1,1 0 1 1 0,-2z M667,58.8 a1,1 0 1 1 0,2 a1,1 0 1 1 0,-2z" fill="#a0a0a0"/><path d="M687.2,53.6 h12.5 v12.4 h-12.5 z" stroke="#8a8a8a" stroke-width="1.2" fill="none" stroke-linejoin="round" /><path d="M690.5,61 a3.5,3.5 0 0 1 5,-4.5 M696.5,59 a3.5,3.5 0 0 1 -5,4.5" stroke="#9a9a9a" stroke-width="1.1" fill="none" stroke-linejoin="round" /><path d="M704.5,62.5 h4 l-2,2.2 z" fill="#bbbbbb"/><path d="M721.3,56 v-2.5 h2.5 M731.5,53.5 h2.5 v2.5 M734,63.5 v2.5 h-2.5 M723.8,66 h-2.5 v-2.5" stroke="#8a8a8a" stroke-width="1.1" fill="none" stroke-linejoin="round" /><path d="M724.5,56.5 h6.3 v7 h-6.3 z M724.5,59 h6.3" stroke="#8a8a8a" stroke-width="1.1" fill="none" stroke-linejoin="round" /><path d="M739.5,62.5 h4 l-2,2.2 z" fill="#bbbbbb"/><rect x="750.5" y="51.5" width="56" height="16" fill="none" stroke="#3e3e3e" stroke-width="1"/><path d="M792,58 h6.2 l-3.1,3.6z" fill="#d8d8d8"/><path d="M812.2,56.6 h8 v7 h-8z M820.2,59 l4.3,-2.4 v7 l-4.3,-2.4z" fill="#dcdcdc"/><rect x="840.5" y="49" width="3.5" height="21" fill="#8fc43a"/><path d="M854.5,62 a4.3,4.3 0 1 0 8.6,0 a4.3,4.3 0 1 0 -8.6,0 M861.5,58.2 l3.5,-3.5 M852.5,66.6 h13" stroke="#8fb04a" stroke-width="1.2" fill="none" stroke-linejoin="round" /><path d="M864,53.8 l1.8,0 l0.8,1.6 l-1.2,1.3 l-1.6,-0.5z" fill="#8fb04a"/><path d="M880.8,62 a4.3,4.3 0 1 1 7,-3.3 M887.5,58.2 l3.5,-3.5 M879.5,66.6 h6" stroke="#8fb04a" stroke-width="1.2" fill="none" stroke-linejoin="round" /><path d="M890,53.8 l1.8,0 l0.8,1.6 l-1.2,1.3 l-1.6,-0.5z" fill="#8fb04a"/><path d="M886,64.5 q3.3,-3.3 6.6,0 q-3.3,3.3 -6.6,0z" stroke="#8fb04a" stroke-width="1.1" fill="none" stroke-linejoin="round" /><path d="M889.3,63.3 a1.2,1.2 0 1 1 0,2.4 a1.2,1.2 0 1 1 0,-2.4z" fill="#8fb04a"/><path d="M908.5,56 l3.5,-2 l3.5,2 v3.6 l-3.5,2 l-3.5,-2z M908.5,56 l3.5,2 l3.5,-2 M912,58 v3.6" stroke="#c0c0c0" stroke-width="1.1" fill="none" stroke-linejoin="round" /><path d="M905.3,61.8 l3.3,-1.9 l3.4,1.9 v3.5 l-3.4,1.9 l-3.3,-1.9z M912,61.8 l3.4,-1.9 l3.4,1.9 v3.5 l-3.4,1.9 l-3.4,-1.9z" stroke="#c0c0c0" stroke-width="1.1" fill="none" stroke-linejoin="round" /><rect x="934" y="49" width="3.5" height="21" fill="#8fc43a"/><path d="M947,55 v7 M945.3,60.5 l1.7,2 l1.7,-2" stroke="#8fb04a" stroke-width="1.2" fill="none" stroke-linejoin="round" /><circle cx="953" cy="58" r="2.6" fill="#8fb04a"/><path d="M949.5,66.5 l4.5,-6 l3,3 l3,-5 M951,66.5 h9" stroke="#8fb04a" stroke-width="1.1" fill="none" stroke-linejoin="round" /><path d="M957,55 a3,3 0 0 1 3,3" stroke="#8fb04a" stroke-width="1.1" fill="none" stroke-linejoin="round" /><path d="M974.5,67 v-14.5 q3,-1.5 5.5,0 q3,1.5 5,0 v7 q-2,1.5 -5,0 q-2.5,-1.5 -5.5,0" stroke="#8aa845" stroke-width="1.3" fill="none" stroke-linejoin="round" /><path d="M999.5,55 h12.5 v11.8 h-12.5z" stroke="#c0c0c0" stroke-width="1.2" fill="none" stroke-linejoin="round" /><rect x="1002.5" y="53" width="6.5" height="3.8" rx="1.9" fill="#262626" stroke="#c0c0c0" stroke-width="1.1"/><path d="M1001.5,59.5 h2 M1004.5,59.5 h6 M1001.5,62.8 h2 M1004.5,62.8 h6" stroke="#c0c0c0" stroke-width="1.4" fill="none" stroke-linejoin="round" /><path d="M1026.5,65 l3,-3 M1033.5,58 l3,-3" stroke="#c4c4c4" stroke-width="1.2" fill="none" stroke-linejoin="round" /><circle cx="1031.4" cy="60" r="3.3" fill="none" stroke="#c4c4c4" stroke-width="1.2"/><path d="M1031.4,58.2 v3.6 M1029.6,60 h3.6" stroke="#c4c4c4" stroke-width="1" fill="none" stroke-linejoin="round" /><path d="M1025,63.8 h2.8 v2.8 h-2.8z M1035.6,53.4 h2.8 v2.8 h-2.8z" fill="#d0d0d0"/><circle cx="1267.5" cy="83" r="3.6" fill="none" stroke="#2a4a00" stroke-width="0.9"/><path d="M1265.8,81.3 l3.4,3.4 M1269.2,81.3 l-3.4,3.4" stroke="#2a4a00" stroke-width="0.9"/><line x1="667" y1="110" x2="667" y2="131" stroke="#3a3a3a" stroke-width="1"/><line x1="879.5" y1="110" x2="879.5" y2="131" stroke="#3a3a3a" stroke-width="1"/><line x1="959" y1="110" x2="959" y2="131" stroke="#3a3a3a" stroke-width="1"/><line x1="1091" y1="110" x2="1091" y2="131" stroke="#3a3a3a" stroke-width="1"/><line x1="1205" y1="110" x2="1205" y2="131" stroke="#3a3a3a" stroke-width="1"/><path d="M597.8,115.5 h11 M598,115.5 l4,10.5" stroke="#c6c6c6" stroke-width="1.2" fill="none" stroke-linejoin="round" /><path d="M602,126 l-0.8,-1.6" stroke="#c6c6c6" stroke-width="1.2" fill="none" stroke-linejoin="round" /><circle cx="607.2" cy="120.5" r="2" fill="none" stroke="#c6c6c6" stroke-width="1.1"/><path d="M625.5,115 h5 v3.5 h-5z M622,122.5 h4.5 v3.5 h-4.5z M629.5,122.5 h4.5 v3.5 h-4.5z" fill="#8fb04a"/><path d="M628,118.5 v2 M624.2,122.5 v-1.8 h7.6 v1.8" stroke="#8fb04a" stroke-width="1.1" fill="none" stroke-linejoin="round" /><path d="M646.5,117.5 l5.8,-3 l5.8,3 l-5.8,3z M646.5,120.5 l5.8,3 l5.8,-3 M646.5,123.5 l5.8,3 l5.8,-3" stroke="#c6c6c6" stroke-width="1.1" fill="none" stroke-linejoin="round" /><path d="M678.5,115.5 h11 M684,115.5 l-4.5,10.5 M684,115.5 l4.5,10.5" stroke="#c6c6c6" stroke-width="1.1" fill="none" stroke-linejoin="round" /><text x="682" y="125.5" font-size="5" fill="#c6c6c6" font-family="Liberation Sans" font-weight="bold">A</text><path d="M695.5,122.5 h4 l-2,2.2 z" fill="#bbbbbb"/><path d="M708.5,116 l2,2 q2,0 3,3 q1,2 3,4" stroke="#c6c6c6" stroke-width="1.2" fill="none" stroke-linejoin="round" /><path d="M725.5,122.5 h4 l-2,2.2 z" fill="#bbbbbb"/><path d="M737.5,126 q3,-6 6,-10 q3,4 6,10 M739,118 q4,-2 8,0" stroke="#8fb04a" stroke-width="1.1" fill="none" stroke-linejoin="round" /><path d="M754.5,122.5 h4 l-2,2.2 z" fill="#bbbbbb"/><path d="M767.5,125 l8,-8" stroke="#c6c6c6" stroke-width="1.2" fill="none" stroke-linejoin="round" /><path d="M766,125 a1.5,1.5 0 1 0 3,0 a1.5,1.5 0 1 0 -3,0z M774,117 a1.5,1.5 0 1 0 3,0 a1.5,1.5 0 1 0 -3,0z" fill="#c6c6c6"/><path d="M784.5,122.5 h4 l-2,2.2 z" fill="#bbbbbb"/><path d="M797.5,125 h3.2 M801,125 v-8 h5" stroke="#c6c6c6" stroke-width="1.2" fill="none" stroke-linejoin="round" /><path d="M796,125 a1.5,1.5 0 1 0 3,0 a1.5,1.5 0 1 0 -3,0z M800,117 a1.5,1.5 0 1 0 3,0 a1.5,1.5 0 1 0 -3,0z" fill="#c6c6c6"/><path d="M814,122.5 h4 l-2,2.2 z" fill="#bbbbbb"/><path d="M827.5,125 q7,-1 8,-8" stroke="#c6c6c6" stroke-width="1.2" fill="none" stroke-linejoin="round" /><path d="M826,125 a1.5,1.5 0 1 0 3,0 a1.5,1.5 0 1 0 -3,0z M834.5,117 a1.5,1.5 0 1 0 3,0 a1.5,1.5 0 1 0 -3,0z" fill="#c6c6c6"/><path d="M843.5,122.5 h4 l-2,2.2 z" fill="#bbbbbb"/><path d="M856.5,125 q1,-7 8,-8" stroke="#c6c6c6" stroke-width="1.2" fill="none" stroke-linejoin="round" /><path d="M855,125 a1.5,1.5 0 1 0 3,0 a1.5,1.5 0 1 0 -3,0z M863.5,117 a1.5,1.5 0 1 0 3,0 a1.5,1.5 0 1 0 -3,0z" fill="#c6c6c6"/><path d="M872.5,122.5 h4 l-2,2.2 z" fill="#bbbbbb"/><path d="M891.5,125.5 l4.5,-9 l5,8" stroke="#8fb04a" stroke-width="1.3" fill="none" stroke-linejoin="round" /><path d="M890,125.5 a1.5,1.5 0 1 0 3,0 a1.5,1.5 0 1 0 -3,0z M900,124.5 a1.5,1.5 0 1 0 3,0 a1.5,1.5 0 1 0 -3,0z" fill="#8fb04a"/><path d="M914.5,116 l10,10" stroke="#c6c6c6" stroke-width="1.2" fill="none" stroke-linejoin="round" /><path d="M913.5,116 a1.5,1.5 0 1 0 3,0 a1.5,1.5 0 1 0 -3,0z M923.5,125.5 a1.5,1.5 0 1 0 3,0 a1.5,1.5 0 1 0 -3,0z" fill="#c6c6c6"/><circle cx="919.5" cy="121" r="1.3" fill="#262626" stroke="#c6c6c6" stroke-width="1"/><path d="M937.5,116.5 h12.5" stroke="#8fb04a" stroke-width="1" fill="none" stroke-linejoin="round" /><path d="M937.2,115 h2.6 v3 h-2.6z M947.5,115 h2.6 v3 h-2.6z M942.2,115.2 a1.5,1.5 0 1 1 0,3 a1.5,1.5 0 1 1 0,-3z" fill="#8fb04a"/><path d="M938,123 q5.5,-5 11,0 q-5.5,5 -11,0z" stroke="#8fb04a" stroke-width="1.1" fill="none" stroke-linejoin="round" /><path d="M943.5,121.3 a1.8,1.8 0 1 1 0,3.6 a1.8,1.8 0 1 1 0,-3.6z" fill="#8fb04a"/><path d="M974.5,114.5 v13 M968,121 h13" stroke="#8fb04a" stroke-width="1.1" fill="none" stroke-linejoin="round" /><path d="M974.5,113.5 l-2,2.5 h4z M974.5,128.5 l-2,-2.5 h4z M967,121 l2.5,-2 v4z M982,121 l-2.5,-2 v4z" fill="#8fb04a"/><path d="M994,121 h10" stroke="#c6c6c6" stroke-width="1.3" fill="none" stroke-linejoin="round" /><path d="M992,121 l3.5,-2.6 v5.2z M1006,121 l-3.5,-2.6 v5.2z" fill="#c6c6c6"/><path d="M1018.5,116 h11 M1019,126.5 h3 M1020.5,126 q2,0 2.5,-5 q0.5,-5 3,-5" stroke="#c6c6c6" stroke-width="1" fill="none" stroke-linejoin="round" /><path d="M1026.5,124 h5.5 M1029.2,121.2 v5.5" stroke="#c6c6c6" stroke-width="1.6" fill="none" stroke-linejoin="round" /><path d="M1035.5,122.5 h4 l-2,2.2 z" fill="#bbbbbb"/><path d="M1046.5,116 h11 M1047,126.5 h3 M1048.5,126 q2,0 2.5,-5 q0.5,-5 3,-5" stroke="#c6c6c6" stroke-width="1" fill="none" stroke-linejoin="round" /><path d="M1052.5,122 l4,4 M1056.5,122 l-4,4" stroke="#c6c6c6" stroke-width="1.5" fill="none" stroke-linejoin="round" /><path d="M1069.5,115 h12 v12 h-12z M1069.5,121.5 h5 v5.5" stroke="#c6c6c6" stroke-width="1.1" fill="none" stroke-linejoin="round" /><path d="M1074,122.5 l6,-6 M1077,116.5 h3 v3" stroke="#c6c6c6" stroke-width="1.1" fill="none" stroke-linejoin="round" /><path d="M1100.5,118.5 v-3 h3 M1111.5,115.5 h3 v3 M1114.5,123.5 v3 h-3 M1103.5,126.5 h-3 v-3 M1103,124 l9,-9" stroke="#c6c6c6" stroke-width="1.1" fill="none" stroke-linejoin="round" /><path d="M1102,123.5 a1.2,1.2 0 1 0 2.4,0 a1.2,1.2 0 1 0 -2.4,0z M1110.6,117.5 a1.2,1.2 0 1 0 2.4,0 a1.2,1.2 0 1 0 -2.4,0z" fill="#c6c6c6"/><path d="M1120.5,122.5 h4 l-2,2.2 z" fill="#bbbbbb"/><path d="M1132,122 v-4.5 a1,1 0 0 1 2,0 v-1.5 a1,1 0 0 1 2,0 v0.5 a1,1 0 0 1 2,0 v1 a1,1 0 0 1 2,0 v5.5 q0,4 -4,4 h-1 q-2,0 -3.5,-2 l-2.5,-3.5 q0,-1.5 1.5,-1z" stroke="#c6c6c6" stroke-width="1" fill="none" stroke-linejoin="round" /><circle cx="1160" cy="120" r="3.8" fill="none" stroke="#c6c6c6" stroke-width="1.2"/><path d="M1162.8,122.8 l3.5,3.5" stroke="#c6c6c6" stroke-width="1.3" fill="none" stroke-linejoin="round" /><path d="M1173.5,122.5 h4 l-2,2.2 z" fill="#bbbbbb"/><path d="M1184.5,120 v6.5 h12 v-6.5" stroke="#c6c6c6" stroke-width="1.2" fill="none" stroke-linejoin="round" /><path d="M1187.5,117 h6 l-3,3.5z" fill="#c6c6c6"/><circle cx="607.5" cy="143.5" r="2.8" fill="none" stroke="#7c7c7c" stroke-width="1"/><path d="M609.5,145.5 l2.5,2.5" stroke="#7c7c7c" stroke-width="1.1"/><path d="M602,169.5 h5 v-5z" fill="#cfcfcf"/><path d="M606,177.5 l4,3 l-4,3z" fill="#dcdcdc"/><path d="M606,190.75 l4,3 l-4,3z" fill="#dcdcdc"/><path d="M606,204 l4,3 l-4,3z" fill="#dcdcdc"/><path d="M607.5,223.0 h5 v-5z" fill="#cfcfcf"/><path d="M619.8,231.1 l2.4,2.4 l-2.4,2.4 l-2.4,-2.4z" fill="#e6cc9a"/><path d="M613,250.0 h5 v-5z" fill="#cfcfcf"/><path d="M618,263.5 h5 v-5z" fill="#cfcfcf"/><circle cx="628.7" cy="274" r="1.8" fill="#d07a7a"/><circle cx="628.7" cy="287.5" r="1.8" fill="#80b070"/><circle cx="628.7" cy="301" r="1.8" fill="#7a82d0"/><path d="M616,311.5 l4,3 l-4,3z" fill="#dcdcdc"/><rect x="700.5" y="272" width="1.2" height="1.2" fill="#5a5a5a"/><rect x="700.5" y="275" width="1.2" height="1.2" fill="#5a5a5a"/><rect x="700.5" y="278" width="1.2" height="1.2" fill="#5a5a5a"/><rect x="700.5" y="281" width="1.2" height="1.2" fill="#5a5a5a"/><rect x="700.5" y="284" width="1.2" height="1.2" fill="#5a5a5a"/><rect x="700.5" y="287" width="1.2" height="1.2" fill="#5a5a5a"/><rect x="700.5" y="290" width="1.2" height="1.2" fill="#5a5a5a"/><rect x="700.5" y="293" width="1.2" height="1.2" fill="#5a5a5a"/><rect x="700.5" y="296" width="1.2" height="1.2" fill="#5a5a5a"/><rect x="700.5" y="299" width="1.2" height="1.2" fill="#5a5a5a"/><rect x="700.5" y="302" width="1.2" height="1.2" fill="#5a5a5a"/><rect x="700.5" y="305" width="1.2" height="1.2" fill="#5a5a5a"/><rect x="700.5" y="308" width="1.2" height="1.2" fill="#5a5a5a"/><rect x="603.5" y="439.5" width="57" height="4" rx="2" fill="#4c4c4c"/><line x1="709.75" y1="136.3" x2="1271.7" y2="136.3" stroke="#3a3a3a" stroke-width="1"/><line x1="709.75" y1="154.4" x2="1271.7" y2="154.4" stroke="#3c3c3c" stroke-width="1"/><line x1="709.75" y1="136" x2="709.75" y2="446.4" stroke="#3a3a3a" stroke-width="1"/><line x1="1271.5" y1="136" x2="1271.5" y2="446.4" stroke="#383838" stroke-width="1"/><line x1="737.25" y1="154.4" x2="737.25" y2="437.5" stroke="#393939" stroke-width="1"/><line x1="737.25" y1="150.6" x2="737.25" y2="153.8" stroke="#8a8a8a" stroke-width="1"/><line x1="771.75" y1="154.4" x2="771.75" y2="437.5" stroke="#393939" stroke-width="1"/><line x1="771.75" y1="150.6" x2="771.75" y2="153.8" stroke="#8a8a8a" stroke-width="1"/><line x1="806.25" y1="154.4" x2="806.25" y2="437.5" stroke="#393939" stroke-width="1"/><line x1="806.25" y1="150.6" x2="806.25" y2="153.8" stroke="#8a8a8a" stroke-width="1"/><line x1="840.75" y1="154.4" x2="840.75" y2="437.5" stroke="#393939" stroke-width="1"/><line x1="840.75" y1="150.6" x2="840.75" y2="153.8" stroke="#8a8a8a" stroke-width="1"/><line x1="875.25" y1="154.4" x2="875.25" y2="437.5" stroke="#393939" stroke-width="1"/><line x1="875.25" y1="150.6" x2="875.25" y2="153.8" stroke="#8a8a8a" stroke-width="1"/><line x1="909.75" y1="154.4" x2="909.75" y2="437.5" stroke="#393939" stroke-width="1"/><line x1="909.75" y1="150.6" x2="909.75" y2="153.8" stroke="#8a8a8a" stroke-width="1"/><line x1="944.25" y1="154.4" x2="944.25" y2="437.5" stroke="#393939" stroke-width="1"/><line x1="944.25" y1="150.6" x2="944.25" y2="153.8" stroke="#8a8a8a" stroke-width="1"/><line x1="978.75" y1="154.4" x2="978.75" y2="437.5" stroke="#393939" stroke-width="1"/><line x1="978.75" y1="150.6" x2="978.75" y2="153.8" stroke="#8a8a8a" stroke-width="1"/><line x1="1013.25" y1="154.4" x2="1013.25" y2="437.5" stroke="#393939" stroke-width="1"/><line x1="1013.25" y1="150.6" x2="1013.25" y2="153.8" stroke="#8a8a8a" stroke-width="1"/><line x1="1047.75" y1="154.4" x2="1047.75" y2="437.5" stroke="#393939" stroke-width="1"/><line x1="1047.75" y1="150.6" x2="1047.75" y2="153.8" stroke="#8a8a8a" stroke-width="1"/><line x1="1082.25" y1="154.4" x2="1082.25" y2="437.5" stroke="#393939" stroke-width="1"/><line x1="1082.25" y1="150.6" x2="1082.25" y2="153.8" stroke="#8a8a8a" stroke-width="1"/><line x1="1116.75" y1="154.4" x2="1116.75" y2="437.5" stroke="#393939" stroke-width="1"/><line x1="1116.75" y1="150.6" x2="1116.75" y2="153.8" stroke="#8a8a8a" stroke-width="1"/><line x1="1151.25" y1="154.4" x2="1151.25" y2="437.5" stroke="#393939" stroke-width="1"/><line x1="1151.25" y1="150.6" x2="1151.25" y2="153.8" stroke="#8a8a8a" stroke-width="1"/><line x1="1185.75" y1="154.4" x2="1185.75" y2="437.5" stroke="#393939" stroke-width="1"/><line x1="1185.75" y1="150.6" x2="1185.75" y2="153.8" stroke="#8a8a8a" stroke-width="1"/><line x1="1220.25" y1="154.4" x2="1220.25" y2="437.5" stroke="#393939" stroke-width="1"/><line x1="1220.25" y1="150.6" x2="1220.25" y2="153.8" stroke="#8a8a8a" stroke-width="1"/><line x1="1254.75" y1="154.4" x2="1254.75" y2="437.5" stroke="#393939" stroke-width="1"/><line x1="1254.75" y1="150.6" x2="1254.75" y2="153.8" stroke="#8a8a8a" stroke-width="1"/><path d="M710.3,140.8 q1.9,0.4 1.9,2.8 q0,2.5 -1.9,2.8" stroke="#9c9c9c" stroke-width="0.9" fill="none"/><line x1="709.75" y1="418.00" x2="1271.7" y2="418.00" stroke="#474747" stroke-width="2"/><line x1="709.75" y1="393.46" x2="1271.7" y2="393.46" stroke="#393939" stroke-width="1"/><line x1="709.75" y1="368.92" x2="1271.7" y2="368.92" stroke="#393939" stroke-width="1"/><line x1="709.75" y1="344.38" x2="1271.7" y2="344.38" stroke="#393939" stroke-width="1"/><line x1="709.75" y1="319.84" x2="1271.7" y2="319.84" stroke="#393939" stroke-width="1"/><line x1="709.75" y1="295.30" x2="1271.7" y2="295.30" stroke="#393939" stroke-width="1"/><line x1="709.75" y1="270.76" x2="1271.7" y2="270.76" stroke="#393939" stroke-width="1"/><line x1="709.75" y1="246.22" x2="1271.7" y2="246.22" stroke="#393939" stroke-width="1"/><line x1="709.75" y1="221.68" x2="1271.7" y2="221.68" stroke="#393939" stroke-width="1"/><line x1="709.75" y1="197.14" x2="1271.7" y2="197.14" stroke="#393939" stroke-width="1"/><line x1="709.75" y1="172.60" x2="1271.7" y2="172.60" stroke="#393939" stroke-width="1"/><line x1="709.75" y1="437.5" x2="1271.7" y2="437.5" stroke="#3c3c3c" stroke-width="1"/><line x1="709.75" y1="446.4" x2="1271.7" y2="446.4" stroke="#3a3a3a" stroke-width="1"/><rect x="1092" y="439.8" width="31" height="4.4" rx="2.2" fill="#555"/><rect x="1273.5" y="289.6" width="4.6" height="31" rx="2" fill="#4a4a4a"/><rect x="1272.5" y="437.5" width="6" height="8" fill="#333"/><line x1="783.2" y1="153" x2="783.2" y2="437.5" stroke="#5d5a36" stroke-width="1"/><rect x="780" y="136.3" width="6.5" height="16.6" fill="#80b916"/><path d="M745,417.5 C843,157 1204.6,294.6 1255.4,172" fill="none" stroke="#aa8a56" stroke-width="1.05"/><path d="M745,417.5 L843,157 M1255.4,172 L1204.6,294.6" stroke="#e6e6e6" stroke-width="1" stroke-dasharray="3,1.8" fill="none"/><circle cx="745" cy="417.5" r="2" fill="#fff"/><circle cx="843.2" cy="156.9" r="1.8" fill="#fff"/><circle cx="1255.4" cy="172" r="2.2" fill="#fff"/><circle cx="1204.6" cy="294.6" r="1.7" fill="#fff"/><path d="M843.6,157.5 v11.5 l2.6,-2.5 l1.8,4 l1.6,-0.7 l-1.8,-3.9 h3.6 z" fill="#fff" stroke="#111" stroke-width="0.7"/><path d="M703.8,462 h6.2 l-3.1,3.4z" fill="#e0e0e0"/><path d="M835.8,462 h5 l-2.5,3z" fill="#444"/><line x1="1065" y1="455" x2="1065" y2="473" stroke="#3c3c3c" stroke-width="1"/><rect x="621" y="481" width="1.2" height="1.2" fill="#555"/><rect x="624" y="481" width="1.2" height="1.2" fill="#555"/><rect x="627" y="481" width="1.2" height="1.2" fill="#555"/><rect x="630" y="481" width="1.2" height="1.2" fill="#555"/><rect x="633" y="481" width="1.2" height="1.2" fill="#555"/><rect x="636" y="481" width="1.2" height="1.2" fill="#555"/><rect x="639" y="481" width="1.2" height="1.2" fill="#555"/><rect x="642" y="481" width="1.2" height="1.2" fill="#555"/><rect x="645" y="481" width="1.2" height="1.2" fill="#555"/><rect x="648" y="481" width="1.2" height="1.2" fill="#555"/><rect x="651" y="481" width="1.2" height="1.2" fill="#555"/><rect x="654" y="481" width="1.2" height="1.2" fill="#555"/><rect x="657" y="481" width="1.2" height="1.2" fill="#555"/><rect x="660" y="481" width="1.2" height="1.2" fill="#555"/><rect x="568.5" y="260" width="1.2" height="1.2" fill="#5a5a5a"/><rect x="568.5" y="263" width="1.2" height="1.2" fill="#5a5a5a"/><rect x="568.5" y="266" width="1.2" height="1.2" fill="#5a5a5a"/><rect x="568.5" y="269" width="1.2" height="1.2" fill="#5a5a5a"/><rect x="568.5" y="272" width="1.2" height="1.2" fill="#5a5a5a"/><rect x="568.5" y="275" width="1.2" height="1.2" fill="#5a5a5a"/><rect x="568.5" y="278" width="1.2" height="1.2" fill="#5a5a5a"/><rect x="568.5" y="281" width="1.2" height="1.2" fill="#5a5a5a"/><rect x="568.5" y="284" width="1.2" height="1.2" fill="#5a5a5a"/><rect x="568.5" y="287" width="1.2" height="1.2" fill="#5a5a5a"/><rect x="568.5" y="290" width="1.2" height="1.2" fill="#5a5a5a"/><rect x="568.5" y="293" width="1.2" height="1.2" fill="#5a5a5a"/><rect x="568.5" y="296" width="1.2" height="1.2" fill="#5a5a5a"/><circle cx="1267.5" cy="490.2" r="3.8" fill="none" stroke="#2a4a00" stroke-width="0.9"/><path d="M1265.7,488.4 l3.6,3.6 M1269.3,488.4 l-3.6,3.6" stroke="#2a4a00" stroke-width="0.9"/><path d="M17,508 h7 M17,512 h7 M17,516 h7" stroke="#c0c0c0" stroke-width="1.5" fill="none" stroke-linejoin="round" /><circle cx="14.8" cy="508" r="1.3" fill="none" stroke="#c0c0c0" stroke-width="0.9"/><circle cx="14.8" cy="512" r="1.3" fill="none" stroke="#c0c0c0" stroke-width="0.9"/><circle cx="14.8" cy="516" r="1.3" fill="none" stroke="#c0c0c0" stroke-width="0.9"/><path d="M40.3,507.5 h9.4 v9.3 h-9.4z" stroke="#8fb04a" stroke-width="1.3" fill="none" stroke-linejoin="round" /><path d="M42.5,508.5 h1.6 v7.3 h-1.6z M45.9,508.5 h1.6 v7.3 h-1.6z M44.1,511.3 h1.8 v1.8 h-1.8z" fill="#8fb04a"/><path d="M38.5,507 l1.5,-1.5" stroke="#8fb04a" stroke-width="0.7" fill="none" stroke-linejoin="round" /><path d="M65,507.5 h9.4 v9.3 h-9.4z" stroke="#8fb04a" stroke-width="1.3" fill="none" stroke-linejoin="round" /><path d="M65.5,511.3 h8.5 v1.8 h-8.5z" fill="#8fb04a"/><path d="M63.3,507 l1.5,-1.5" stroke="#8fb04a" stroke-width="0.7" fill="none" stroke-linejoin="round" /><path d="M88,508 h10" stroke="#bdbdbd" stroke-width="1" fill="none" stroke-linejoin="round" /><path d="M96,509.5 a1.2,1.2 0 1 1 0,2.4 a1.2,1.2 0 1 1 0,-2.4z M89,513.5 l3,-2.3 v4.6z" fill="#c0c0c0"/><path d="M91.5,513.5 h4 M95.8,514.3 h2" stroke="#c0c0c0" stroke-width="1.3" fill="none" stroke-linejoin="round" /><path d="M112.5,508 h10" stroke="#a8a8a8" stroke-width="1" fill="none" stroke-linejoin="round" /><path d="M113.5,509.5 a1.2,1.2 0 1 1 0,2.4 a1.2,1.2 0 1 1 0,-2.4z" fill="#b0b0b0"/><path d="M119.5,510.5 v6 M116.5,513.5 h6 M112.5,514.3 h2" stroke="#b0b0b0" stroke-width="1.3" fill="none" stroke-linejoin="round" /><path d="M137.5,508 h10" stroke="#bdbdbd" stroke-width="1" fill="none" stroke-linejoin="round" /><path d="M138.5,509.5 a1.2,1.2 0 1 1 0,2.4 a1.2,1.2 0 1 1 0,-2.4z M148,513.5 l-3,-2.3 v4.6z" fill="#c0c0c0"/><path d="M141.5,513.5 h4 M137.5,514.3 h2" stroke="#c0c0c0" stroke-width="1.3" fill="none" stroke-linejoin="round" /><path d="M163.6,508.5 q0,-1.3 1.3,-1.3 h4 l3,3 v6 q0,1.3 -1.3,1.3 h-5.7 q-1.3,0 -1.3,-1.3z" stroke="#c8c8c8" stroke-width="1.1" fill="none" stroke-linejoin="round" /><path d="M179.8,514 h4 l-2,2.2 z" fill="#bbbbbb"/><path d="M200.3,506.5 v11" stroke="#b8b8b8" stroke-width="0.9" fill="none" stroke-linejoin="round" /><path d="M196.5,509 h2.8 v6 h-2.8z M201.5,509 h3 v6 h-3z" fill="#b0b0b0"/><path d="M219.5,508 h10.5 v9 h-10.5z M222.5,508 v9" stroke="#7d9a40" stroke-width="1.2" fill="none" stroke-linejoin="round" /><path d="M226.5,511.3 h2 v2 h-2z" fill="#a0c060"/><line x1="239.5" y1="501" x2="239.5" y2="523" stroke="#3a3a3a" stroke-width="1"/><ellipse cx="252.5" cy="515.5" rx="2.2" ry="1.7" fill="#a8a8a8"/><path d="M254.5,515.5 v-8.5" stroke="#a8a8a8" stroke-width="1.1" fill="none" stroke-linejoin="round" /><path d="M256.5,508.5 h4 M256.5,512 h4 M256.5,515.5 h4" stroke="#a8a8a8" stroke-width="1.1" fill="none" stroke-linejoin="round" /><path d="M276,510.5 q5.5,-4 11,0 l-5.5,3.5z" stroke="#b0b0b0" stroke-width="1.2" fill="none" stroke-linejoin="round" /><path d="M283,514.5 h4 M285,512.5 v4" stroke="#b0b0b0" stroke-width="1" fill="none" stroke-linejoin="round" /><path d="M299.5,507 h9 l2.5,2.5 v8.5 h-11.5z" fill="#5f5f5f"/><path d="M302,508 h4 v4 h-4z" fill="#8a8a8a"/><path d="M329,508.5 h13 v7.5 h-13z" stroke="#8fb04a" stroke-width="1.1" fill="none" stroke-linejoin="round" /><path d="M330.5,510 h4.5 v4.5 h-4.5z" fill="#3a4a20"/><path d="M336,510 h5 v4.5 h-5z" fill="#8fb04a"/><path d="M338.5,510 v4.5 M336.3,512.3 h4.5" stroke="#2c2c2c" stroke-width="0.8" fill="none" stroke-linejoin="round" /><path d="M353.6,508.5 h13 v7.5 h-13z" stroke="#bdbdbd" stroke-width="1.1" fill="none" stroke-linejoin="round" /><path d="M357,512.3 h6.5" stroke="#c8c8c8" stroke-width="1.2" fill="none" stroke-linejoin="round" /><path d="M355.8,512.3 l2,-1.6 v3.2z M364.6,512.3 l-2,-1.6 v3.2z" fill="#c8c8c8"/><line x1="374.5" y1="501" x2="374.5" y2="523" stroke="#3a3a3a" stroke-width="1"/><path d="M384.6,508 h4.5 v9 h-4.5z M386.4,508 v9" stroke="#bdbdbd" stroke-width="1.1" fill="none" stroke-linejoin="round" /><path d="M393,509.5 v6 M390,512.5 h6" stroke="#dcdcdc" stroke-width="1.6" fill="none" stroke-linejoin="round" /><path d="M409.6,508 h4.5 v9 h-4.5z M411.4,508 v9" stroke="#999" stroke-width="1.1" fill="none" stroke-linejoin="round" /><path d="M416.2,510.5 l3.5,3.5 M419.7,510.5 l-3.5,3.5" stroke="#aaa" stroke-width="1.1" fill="none" stroke-linejoin="round" /><path d="M434.5,508 h10.5 v9 h-10.5z M437,508 v9 M442.5,508 v9" stroke="#c0c0c0" stroke-width="1.1" fill="none" stroke-linejoin="round" /><path d="M439.3,509.5 h1.8 v6 h-1.8z" fill="#d0d0d0"/><line x1="453.5" y1="501" x2="453.5" y2="523" stroke="#3a3a3a" stroke-width="1"/><circle cx="469" cy="511.5" r="3.8" fill="none" stroke="#bdbdbd" stroke-width="1.1"/><path d="M469,509.5 v4 M467,511.5 h4 M471.8,514.3 l2.5,2.5" stroke="#bdbdbd" stroke-width="1" fill="none" stroke-linejoin="round" /><path d="M482.5,514 h4 l-2,2.2 z" fill="#bbbbbb"/><path d="M499,516.8 l5.5,-5.8 v5.8z" fill="#c8c8c8"/><path d="M506.8,509.8 v7" stroke="#c8c8c8" stroke-width="1.5" fill="none" stroke-linejoin="round" /><path d="M533.5,516.8 l-5.5,-5.8 v5.8z" fill="#c8c8c8"/><path d="M524.8,509.8 v7" stroke="#c8c8c8" stroke-width="1.5" fill="none" stroke-linejoin="round" /><path d="M547.5,511 v6.3 h11 v-6.3" stroke="#bdbdbd" stroke-width="1.1" fill="none" stroke-linejoin="round" /><path d="M550.5,508 h5 l-2.5,3z" fill="#c8c8c8"/><line x1="566.5" y1="501" x2="566.5" y2="523" stroke="#3a3a3a" stroke-width="1"/><path d="M580.2,508.5 l6.3,4 l-6.3,4z" fill="#d8d8d8"/><path d="M603.5,508.5 h1.6 v8 h-1.6z M611.5,508.5 v8 l-6,-4z" fill="#d8d8d8"/><path d="M628,512.5 l4,-4 v8z M632,512.5 l4,-4 v8z" fill="#d8d8d8"/><path d="M661,512.5 l-4,-4 v8z M657,512.5 l-4,-4 v8z" fill="#d8d8d8"/><path d="M677.5,508.5 l6,4 l-6,4z M684.3,508.5 h1.6 v8 h-1.6z" fill="#d8d8d8"/><path d="M702,511.5 v-2.5 h8.5 M711,514 v2.5 h-8.5" stroke="#8fb04a" stroke-width="1.3" fill="none" stroke-linejoin="round" /><path d="M709.5,507 l2.5,2 l-2.5,2z M703.5,514.5 l-2.5,2 l2.5,2z" fill="#8fb04a"/><path d="M1263.8,507.5 h10 v4 h-10z" stroke="#8fb04a" stroke-width="1.1" fill="none" stroke-linejoin="round" /><path d="M1264.5,513 q4.5,5 9,0" stroke="#8fb04a" stroke-width="1.1" fill="none" stroke-linejoin="round" /><path d="M1266.5,512.3 h5 l-2.5,2.7z" fill="#8fb04a"/><path d="M2.5,555.5 h4.5 v-4.5z" fill="#bdbdbd"/><path d="M12.5,571 h4.5 v-4.5z" fill="#d0d0d0"/><circle cx="107" cy="552.5" r="4.4" fill="none" stroke="#bcbcbc" stroke-width="0.9"/><path d="M105,551.6 l2,2 l2,-2" stroke="#bcbcbc" stroke-width="0.9" fill="none"/><circle cx="120.8" cy="552.5" r="4.4" fill="none" stroke="#bcbcbc" stroke-width="0.9"/><path d="M118.89999999999999,550.6 l3.8,3.8 M122.7,550.6 l-3.8,3.8" stroke="#bcbcbc" stroke-width="0.9"/><circle cx="107" cy="568.2" r="4.4" fill="none" stroke="#bcbcbc" stroke-width="0.9"/><path d="M105,567.3000000000001 l2,2 l2,-2" stroke="#bcbcbc" stroke-width="0.9" fill="none"/><circle cx="120.8" cy="568.2" r="4.4" fill="none" stroke="#bcbcbc" stroke-width="0.9"/><path d="M118.89999999999999,566.3000000000001 l3.8,3.8 M122.7,566.3000000000001 l-3.8,3.8" stroke="#bcbcbc" stroke-width="0.9"/><circle cx="120.8" cy="584" r="4.4" fill="none" stroke="#bcbcbc" stroke-width="0.9"/><path d="M118.89999999999999,582.1 l3.8,3.8 M122.7,582.1 l-3.8,3.8" stroke="#bcbcbc" stroke-width="0.9"/><circle cx="120.8" cy="600" r="4.4" fill="none" stroke="#bcbcbc" stroke-width="0.9"/><path d="M118.89999999999999,598.1 l3.8,3.8 M122.7,598.1 l-3.8,3.8" stroke="#bcbcbc" stroke-width="0.9"/><circle cx="120.8" cy="616" r="4.4" fill="none" stroke="#bcbcbc" stroke-width="0.9"/><path d="M118.89999999999999,614.1 l3.8,3.8 M122.7,614.1 l-3.8,3.8" stroke="#bcbcbc" stroke-width="0.9"/><line x1="132.86" y1="541" x2="132.86" y2="544.6" stroke="#9a9a9a" stroke-width="1"/><line x1="166.30" y1="541" x2="166.30" y2="544.6" stroke="#9a9a9a" stroke-width="1"/><line x1="199.75" y1="541" x2="199.75" y2="544.6" stroke="#9a9a9a" stroke-width="1"/><line x1="233.19" y1="541" x2="233.19" y2="544.6" stroke="#9a9a9a" stroke-width="1"/><line x1="266.64" y1="541" x2="266.64" y2="544.6" stroke="#9a9a9a" stroke-width="1"/><line x1="300.08" y1="541" x2="300.08" y2="544.6" stroke="#9a9a9a" stroke-width="1"/><line x1="333.52" y1="541" x2="333.52" y2="544.6" stroke="#9a9a9a" stroke-width="1"/><line x1="366.97" y1="541" x2="366.97" y2="544.6" stroke="#9a9a9a" stroke-width="1"/><line x1="400.41" y1="541" x2="400.41" y2="544.6" stroke="#9a9a9a" stroke-width="1"/><line x1="433.86" y1="541" x2="433.86" y2="544.6" stroke="#9a9a9a" stroke-width="1"/><line x1="467.30" y1="541" x2="467.30" y2="544.6" stroke="#9a9a9a" stroke-width="1"/><line x1="500.74" y1="541" x2="500.74" y2="544.6" stroke="#9a9a9a" stroke-width="1"/><line x1="534.19" y1="541" x2="534.19" y2="544.6" stroke="#9a9a9a" stroke-width="1"/><line x1="567.63" y1="541" x2="567.63" y2="544.6" stroke="#9a9a9a" stroke-width="1"/><line x1="601.08" y1="541" x2="601.08" y2="544.6" stroke="#9a9a9a" stroke-width="1"/><line x1="634.52" y1="541" x2="634.52" y2="544.6" stroke="#9a9a9a" stroke-width="1"/><line x1="667.96" y1="541" x2="667.96" y2="544.6" stroke="#9a9a9a" stroke-width="1"/><line x1="701.41" y1="541" x2="701.41" y2="544.6" stroke="#9a9a9a" stroke-width="1"/><line x1="734.85" y1="541" x2="734.85" y2="544.6" stroke="#9a9a9a" stroke-width="1"/><line x1="768.30" y1="541" x2="768.30" y2="544.6" stroke="#9a9a9a" stroke-width="1"/><line x1="801.74" y1="541" x2="801.74" y2="544.6" stroke="#9a9a9a" stroke-width="1"/><line x1="835.18" y1="541" x2="835.18" y2="544.6" stroke="#9a9a9a" stroke-width="1"/><line x1="868.63" y1="541" x2="868.63" y2="544.6" stroke="#9a9a9a" stroke-width="1"/><line x1="902.07" y1="541" x2="902.07" y2="544.6" stroke="#9a9a9a" stroke-width="1"/><line x1="935.52" y1="541" x2="935.52" y2="544.6" stroke="#9a9a9a" stroke-width="1"/><line x1="968.96" y1="541" x2="968.96" y2="544.6" stroke="#9a9a9a" stroke-width="1"/><line x1="1002.40" y1="541" x2="1002.40" y2="544.6" stroke="#9a9a9a" stroke-width="1"/><line x1="1035.85" y1="541" x2="1035.85" y2="544.6" stroke="#9a9a9a" stroke-width="1"/><line x1="1069.29" y1="541" x2="1069.29" y2="544.6" stroke="#9a9a9a" stroke-width="1"/><line x1="1102.74" y1="541" x2="1102.74" y2="544.6" stroke="#9a9a9a" stroke-width="1"/><line x1="1136.18" y1="541" x2="1136.18" y2="544.6" stroke="#9a9a9a" stroke-width="1"/><line x1="1169.62" y1="541" x2="1169.62" y2="544.6" stroke="#9a9a9a" stroke-width="1"/><line x1="1203.07" y1="541" x2="1203.07" y2="544.6" stroke="#9a9a9a" stroke-width="1"/><line x1="1236.51" y1="541" x2="1236.51" y2="544.6" stroke="#9a9a9a" stroke-width="1"/><line x1="1269.96" y1="541" x2="1269.96" y2="544.6" stroke="#9a9a9a" stroke-width="1"/><path d="M137.5,576 V624.3 M144.5,576 V624.3 M151.5,576 V624.3 M157.5,576 V624.3 M164.5,576 V624.3 M171.5,576 V624.3 M178.5,576 V624.3 M184.5,576 V624.3 M191.5,576 V624.3 M198.5,576 V624.3 M204.5,576 V624.3 M211.5,576 V624.3 M218.5,576 V624.3 M224.5,576 V624.3 M231.5,576 V624.3 M238.5,576 V624.3 M244.5,576 V624.3 M251.5,576 V624.3 M258.5,576 V624.3 M264.5,576 V624.3 M271.5,576 V624.3 M278.5,576 V624.3 M285.5,576 V624.3 M291.5,576 V624.3 M298.5,576 V624.3 M305.5,576 V624.3 M311.5,576 V624.3 M318.5,576 V624.3 M325.5,576 V624.3 M331.5,576 V624.3 M338.5,576 V624.3 M345.5,576 V624.3 M351.5,576 V624.3 M358.5,576 V624.3 M365.5,576 V624.3 M372.5,576 V624.3 M378.5,576 V624.3 M385.5,576 V624.3 M392.5,576 V624.3 M398.5,576 V624.3 M405.5,576 V624.3 M412.5,576 V624.3 M418.5,576 V624.3 M425.5,576 V624.3 M432.5,576 V624.3 M438.5,576 V624.3 M445.5,576 V624.3 M452.5,576 V624.3 M458.5,576 V624.3 M465.5,576 V624.3 M472.5,576 V624.3 M479.5,576 V624.3 M485.5,576 V624.3 M492.5,576 V624.3 M499.5,576 V624.3 M505.5,576 V624.3 M512.5,576 V624.3 M519.5,576 V624.3 M525.5,576 V624.3 M532.5,576 V624.3 M539.5,576 V624.3 M545.5,576 V624.3 M552.5,576 V624.3 M559.5,576 V624.3 M565.5,576 V624.3 M572.5,576 V624.3 M579.5,576 V624.3 M586.5,576 V624.3 M592.5,576 V624.3 M599.5,576 V624.3 M606.5,576 V624.3 M612.5,576 V624.3 M619.5,576 V624.3 M626.5,576 V624.3 M632.5,576 V624.3 M639.5,576 V624.3 M646.5,576 V624.3 M652.5,576 V624.3 M659.5,576 V624.3 M666.5,576 V624.3 M672.5,576 V624.3 M679.5,576 V624.3 M686.5,576 V624.3 M693.5,576 V624.3 M699.5,576 V624.3 M706.5,576 V624.3 M713.5,576 V624.3 M719.5,576 V624.3 M726.5,576 V624.3 M733.5,576 V624.3 M739.5,576 V624.3 M746.5,576 V624.3 M753.5,576 V624.3 M759.5,576 V624.3 M766.5,576 V624.3 M773.5,576 V624.3 M780.5,576 V624.3 M786.5,576 V624.3 M793.5,576 V624.3 M800.5,576 V624.3 M806.5,576 V624.3 M813.5,576 V624.3 M820.5,576 V624.3 M826.5,576 V624.3 M833.5,576 V624.3 M840.5,576 V624.3 M846.5,576 V624.3 M853.5,576 V624.3 M860.5,576 V624.3 M866.5,576 V624.3 M873.5,576 V624.3 M880.5,576 V624.3 M887.5,576 V624.3 M893.5,576 V624.3 M900.5,576 V624.3 M907.5,576 V624.3 M913.5,576 V624.3 M920.5,576 V624.3 M927.5,576 V624.3 M933.5,576 V624.3 M940.5,576 V624.3 M947.5,576 V624.3 M953.5,576 V624.3 M960.5,576 V624.3 M967.5,576 V624.3 M973.5,576 V624.3 M980.5,576 V624.3 M987.5,576 V624.3 M994.5,576 V624.3 M1000.5,576 V624.3 M1007.5,576 V624.3 M1014.5,576 V624.3 M1020.5,576 V624.3 M1027.5,576 V624.3 M1034.5,576 V624.3 M1040.5,576 V624.3 M1047.5,576 V624.3 M1054.5,576 V624.3 M1060.5,576 V624.3 M1067.5,576 V624.3 M1074.5,576 V624.3 M1081.5,576 V624.3 M1087.5,576 V624.3 M1094.5,576 V624.3 M1101.5,576 V624.3 M1107.5,576 V624.3 M1114.5,576 V624.3 M1121.5,576 V624.3 M1127.5,576 V624.3 M1134.5,576 V624.3 M1141.5,576 V624.3 M1147.5,576 V624.3 M1154.5,576 V624.3 M1161.5,576 V624.3 M1167.5,576 V624.3 M1174.5,576 V624.3 M1181.5,576 V624.3 M1188.5,576 V624.3 M1194.5,576 V624.3 M1201.5,576 V624.3 M1208.5,576 V624.3 M1214.5,576 V624.3 M1221.5,576 V624.3 M1228.5,576 V624.3 M1234.5,576 V624.3 M1241.5,576 V624.3 M1248.5,576 V624.3 M1254.5,576 V624.3 M1261.5,576 V624.3 M1268.5,576 V624.3" stroke="#303030" stroke-width="1"/><path d="M134.5,576 V624.3 M141.5,576 V624.3 M147.5,576 V624.3 M154.5,576 V624.3 M161.5,576 V624.3 M167.5,576 V624.3 M174.5,576 V624.3 M181.5,576 V624.3 M188.5,576 V624.3 M194.5,576 V624.3 M201.5,576 V624.3 M208.5,576 V624.3 M214.5,576 V624.3 M221.5,576 V624.3 M228.5,576 V624.3 M234.5,576 V624.3 M241.5,576 V624.3 M248.5,576 V624.3 M254.5,576 V624.3 M261.5,576 V624.3 M268.5,576 V624.3 M275.5,576 V624.3 M281.5,576 V624.3 M288.5,576 V624.3 M295.5,576 V624.3 M301.5,576 V624.3 M308.5,576 V624.3 M315.5,576 V624.3 M321.5,576 V624.3 M328.5,576 V624.3 M335.5,576 V624.3 M341.5,576 V624.3 M348.5,576 V624.3 M355.5,576 V624.3 M361.5,576 V624.3 M368.5,576 V624.3 M375.5,576 V624.3 M382.5,576 V624.3 M388.5,576 V624.3 M395.5,576 V624.3 M402.5,576 V624.3 M408.5,576 V624.3 M415.5,576 V624.3 M422.5,576 V624.3 M428.5,576 V624.3 M435.5,576 V624.3 M442.5,576 V624.3 M448.5,576 V624.3 M455.5,576 V624.3 M462.5,576 V624.3 M468.5,576 V624.3 M475.5,576 V624.3 M482.5,576 V624.3 M489.5,576 V624.3 M495.5,576 V624.3 M502.5,576 V624.3 M509.5,576 V624.3 M515.5,576 V624.3 M522.5,576 V624.3 M529.5,576 V624.3 M535.5,576 V624.3 M542.5,576 V624.3 M549.5,576 V624.3 M555.5,576 V624.3 M562.5,576 V624.3 M569.5,576 V624.3 M576.5,576 V624.3 M582.5,576 V624.3 M589.5,576 V624.3 M596.5,576 V624.3 M602.5,576 V624.3 M609.5,576 V624.3 M616.5,576 V624.3 M622.5,576 V624.3 M629.5,576 V624.3 M636.5,576 V624.3 M642.5,576 V624.3 M649.5,576 V624.3 M656.5,576 V624.3 M662.5,576 V624.3 M669.5,576 V624.3 M676.5,576 V624.3 M683.5,576 V624.3 M689.5,576 V624.3 M696.5,576 V624.3 M703.5,576 V624.3 M709.5,576 V624.3 M716.5,576 V624.3 M723.5,576 V624.3 M729.5,576 V624.3 M736.5,576 V624.3 M743.5,576 V624.3 M749.5,576 V624.3 M756.5,576 V624.3 M763.5,576 V624.3 M769.5,576 V624.3 M776.5,576 V624.3 M783.5,576 V624.3 M790.5,576 V624.3 M796.5,576 V624.3 M803.5,576 V624.3 M810.5,576 V624.3 M816.5,576 V624.3 M823.5,576 V624.3 M830.5,576 V624.3 M836.5,576 V624.3 M843.5,576 V624.3 M850.5,576 V624.3 M856.5,576 V624.3 M863.5,576 V624.3 M870.5,576 V624.3 M877.5,576 V624.3 M883.5,576 V624.3 M890.5,576 V624.3 M897.5,576 V624.3 M903.5,576 V624.3 M910.5,576 V624.3 M917.5,576 V624.3 M923.5,576 V624.3 M930.5,576 V624.3 M937.5,576 V624.3 M943.5,576 V624.3 M950.5,576 V624.3 M957.5,576 V624.3 M963.5,576 V624.3 M970.5,576 V624.3 M977.5,576 V624.3 M984.5,576 V624.3 M990.5,576 V624.3 M997.5,576 V624.3 M1004.5,576 V624.3 M1010.5,576 V624.3 M1017.5,576 V624.3 M1024.5,576 V624.3 M1030.5,576 V624.3 M1037.5,576 V624.3 M1044.5,576 V624.3 M1050.5,576 V624.3 M1057.5,576 V624.3 M1064.5,576 V624.3 M1070.5,576 V624.3 M1077.5,576 V624.3 M1084.5,576 V624.3 M1091.5,576 V624.3 M1097.5,576 V624.3 M1104.5,576 V624.3 M1111.5,576 V624.3 M1117.5,576 V624.3 M1124.5,576 V624.3 M1131.5,576 V624.3 M1137.5,576 V624.3 M1144.5,576 V624.3 M1151.5,576 V624.3 M1157.5,576 V624.3 M1164.5,576 V624.3 M1171.5,576 V624.3 M1178.5,576 V624.3 M1184.5,576 V624.3 M1191.5,576 V624.3 M1198.5,576 V624.3 M1204.5,576 V624.3 M1211.5,576 V624.3 M1218.5,576 V624.3 M1224.5,576 V624.3 M1231.5,576 V624.3 M1238.5,576 V624.3 M1244.5,576 V624.3 M1251.5,576 V624.3 M1258.5,576 V624.3 M1264.5,576 V624.3 M1271.5,576 V624.3" stroke="#3e3e3e" stroke-width="1"/><rect x="195.80" y="576" width="4.95" height="48.3" fill="#1f1f1f"/><rect x="262.69" y="576" width="4.95" height="48.3" fill="#1f1f1f"/><rect x="329.58" y="576" width="4.95" height="48.3" fill="#1f1f1f"/><rect x="396.47" y="576" width="4.95" height="48.3" fill="#1f1f1f"/><rect x="463.36" y="576" width="4.95" height="48.3" fill="#1f1f1f"/><rect x="530.24" y="576" width="4.95" height="48.3" fill="#1f1f1f"/><rect x="597.13" y="576" width="4.95" height="48.3" fill="#1f1f1f"/><rect x="664.02" y="576" width="4.95" height="48.3" fill="#1f1f1f"/><rect x="730.91" y="576" width="4.95" height="48.3" fill="#1f1f1f"/><rect x="797.80" y="576" width="4.95" height="48.3" fill="#1f1f1f"/><rect x="864.68" y="576" width="4.95" height="48.3" fill="#1f1f1f"/><rect x="931.57" y="576" width="4.95" height="48.3" fill="#1f1f1f"/><rect x="998.46" y="576" width="4.95" height="48.3" fill="#1f1f1f"/><rect x="1065.35" y="576" width="4.95" height="48.3" fill="#1f1f1f"/><rect x="1132.24" y="576" width="4.95" height="48.3" fill="#1f1f1f"/><rect x="1199.12" y="576" width="4.95" height="48.3" fill="#1f1f1f"/><rect x="1266.01" y="576" width="4.95" height="48.3" fill="#1f1f1f"/><line x1="133" y1="576.5" x2="1272" y2="576.5" stroke="#3e3e3e" stroke-width="1"/><line x1="133" y1="592.5" x2="1272" y2="592.5" stroke="#3e3e3e" stroke-width="1"/><line x1="133" y1="608.5" x2="1272" y2="608.5" stroke="#3e3e3e" stroke-width="1"/><line x1="133" y1="624.5" x2="1272" y2="624.5" stroke="#3e3e3e" stroke-width="1"/><path d="M133.2,546 h8.6 v10.6 l-1.5,2.8 l-1.6,-1.6 h-2.4 l-1.6,1.6 l-1.5,-2.8z" fill="#aeaeb2"/><path d="M133.2,561.5 h8.6 v10.6 l-1.5,2.8 l-1.6,-1.6 h-2.4 l-1.6,1.6 l-1.5,-2.8z" fill="#aeaeb2"/><rect x="139.3" y="545" width="3" height="15.3" fill="#393939"/><rect x="139.3" y="560.7" width="3" height="15.2" fill="#2c2c2c"/><path d="M301.1,546 h8.6 v10.6 l-1.5,2.8 l-1.6,-1.6 h-2.4 l-1.6,1.6 l-1.5,-2.8z" fill="#b0b0b4"/><path d="M301.1,561.5 h8.6 v10.6 l-1.5,2.8 l-1.6,-1.6 h-2.4 l-1.6,1.6 l-1.5,-2.8z" fill="#b0b0b4"/><path d="M798.5,545.8 h6.6 v9.3 l-3.3,4.5 l-3.3,-4.5z" fill="#8cc030"/><path d="M798.5,561.3 h6.6 v9.3 l-3.3,4.5 l-3.3,-4.5z" fill="#8cc030"/><line x1="308" y1="584.5" x2="768" y2="584.5" stroke="#c8c8c8" stroke-width="1"/><path d="M305,581 l4.2,3.5 l-4.2,3.5z" fill="#c8c8c8"/><line x1="769" y1="584.5" x2="1272" y2="584.5" stroke="#a2c050" stroke-width="1"/><rect x="766.6" y="579.3" width="3.4" height="9.6" fill="#9cc23c"/><path d="M800,581 l4,3.5 l-4,3.5z" fill="#a8cc48"/><path d="M134,600 l2.5,-2.4 l2.5,2.4 l-2.5,2.4z" fill="#c8c8c8"/><line x1="137" y1="616.5" x2="302" y2="616.5" stroke="#c8c8c8" stroke-width="1"/><path d="M134.5,612.5 l4,3.5 l-4,3.5z M305.5,612.5 l-4,3.5 l4,3.5z" fill="#c8c8c8"/><rect x="133" y="598" width="1" height="1.4" fill="#5a5a5a"/><rect x="133" y="601" width="1" height="1.4" fill="#5a5a5a"/><rect x="133" y="604" width="1" height="1.4" fill="#5a5a5a"/><rect x="133" y="607" width="1" height="1.4" fill="#5a5a5a"/><rect x="133" y="610" width="1" height="1.4" fill="#5a5a5a"/><rect x="133" y="613" width="1" height="1.4" fill="#5a5a5a"/><rect x="133" y="616" width="1" height="1.4" fill="#5a5a5a"/><rect x="133" y="619" width="1" height="1.4" fill="#5a5a5a"/><rect x="133" y="622" width="1" height="1.4" fill="#5a5a5a"/><rect x="133" y="625" width="1" height="1.4" fill="#5a5a5a"/><rect x="133" y="628" width="1" height="1.4" fill="#5a5a5a"/><rect x="133" y="631" width="1" height="1.4" fill="#5a5a5a"/><line x1="300.6" y1="528" x2="300.6" y2="543.5" stroke="#8cbf30" stroke-width="1.1"/><path d="M300.6,528 h4 l-4,4z" fill="#8cbf30"/><line x1="810" y1="528" x2="810" y2="543.5" stroke="#8cbf30" stroke-width="1.1"/><path d="M810,528 h-4 l4,4z" fill="#8cbf30"/><line x1="343.5" y1="544" x2="343.5" y2="625" stroke="#5d5a36" stroke-width="1"/><rect x="340" y="528.9" width="7" height="14.8" fill="#80b916"/><rect x="1274.2" y="546" width="4" height="140" rx="2" fill="#4a4a4a"/><rect x="2.3" y="701.2" width="124.5" height="3.6" rx="1.8" fill="#505050"/><rect x="137.5" y="701.2" width="206" height="3.6" rx="1.8" fill="#505050"/></svg>
</body></html>
